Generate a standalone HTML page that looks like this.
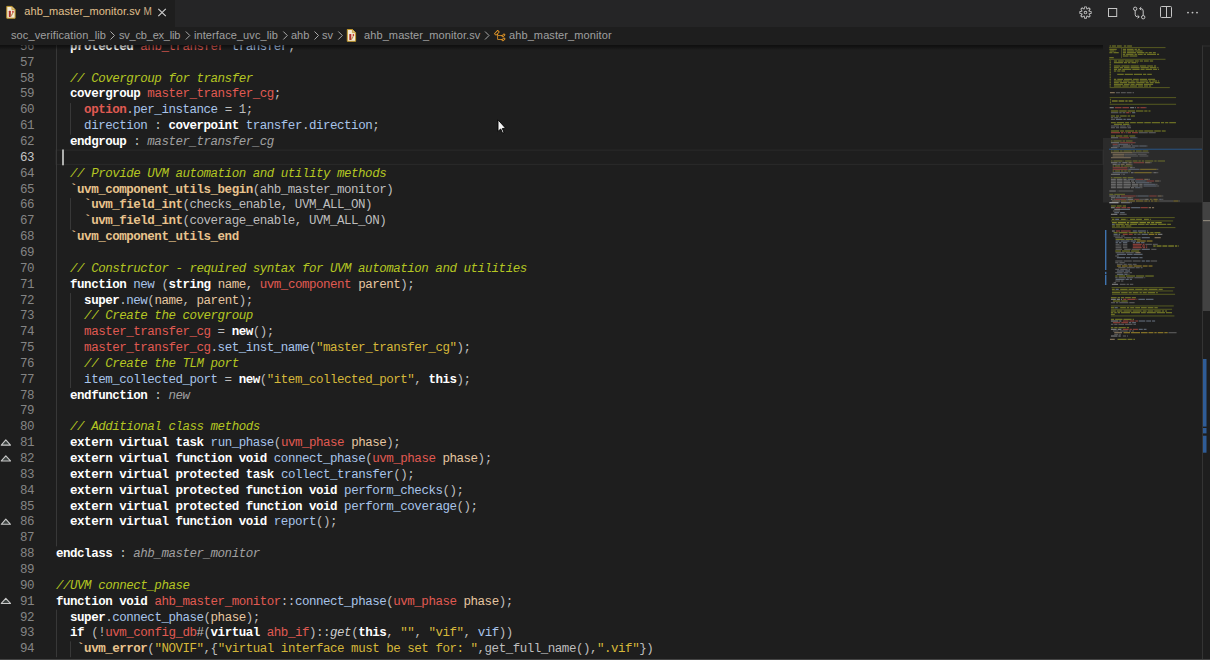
<!DOCTYPE html>
<html><head><meta charset="utf-8">
<style>
*{margin:0;padding:0;box-sizing:border-box}
html,body{width:1210px;height:660px;overflow:hidden;background:#1e1e1e}
body{position:relative;font-family:"Liberation Sans",sans-serif}
#tabs{position:absolute;left:0;top:0;width:1210px;height:27px;background:#252526}
#tab{position:absolute;left:0;top:0;width:175px;height:27px;background:#1e1e1e}
#tabname{position:absolute;left:24.3px;top:4px;font-size:11px;letter-spacing:0.08px;line-height:15px;color:#e2c08d;white-space:pre}
#tabM{position:absolute;left:143.5px;top:4.2px;font-size:10px;line-height:15px;color:#cdb088}
#crumbs{position:absolute;left:0;top:27px;width:1210px;height:18px;background:#1e1e1e;font-size:11px;color:#a0a0a0;white-space:pre}
#crumbs span{position:absolute;top:1px;line-height:15px}
#editor{position:absolute;left:0;top:45px;width:1103px;height:615px;overflow:hidden;background:#1e1e1e}
#code{position:absolute;left:0;top:0;width:1103px;font-family:"Liberation Mono",monospace;font-size:12.5px;letter-spacing:-0.476px;line-height:15.8333px;color:#bdbdbd;white-space:pre}
.ln{position:absolute;left:0;width:34px;text-align:right;color:#858585}
.ln.cur{color:#c6c6c6}
.tx{position:absolute;left:56px}
.k{color:#ffffff;font-weight:bold}
.c{color:#b4c622;font-style:italic}
.r{color:#e05a52}
.rb{color:#e05a52;font-weight:bold}
.s{color:#d6b83a}
.m{color:#e9c38d;font-weight:bold}
.f{color:#a8c4ea}
.p{color:#e6c6a0}
.i{color:#a0a0a0;font-style:italic}
.ii{color:#cccccc;font-style:italic}
#shadow{position:absolute;left:0;top:45px;width:1103px;height:5px;background:linear-gradient(#00000080 0%,#00000060 40%,#00000000 100%)}
</style></head><body>
<div id="tabs">
  <div id="tab">
    <div id="tabname">ahb_master_monitor.sv</div>
    <div id="tabM">M</div>
  </div>
</div>
<div id="crumbs">
  <span style="left:11px;letter-spacing:0.1px">soc_verification_lib</span>
  <span style="left:119px;letter-spacing:-0.2px">sv_cb_ex_lib</span>
  <span style="left:194px;letter-spacing:0.08px">interface_uvc_lib</span>
  <span style="left:291px">ahb</span>
  <span style="left:322px">sv</span>
  <span style="left:364px;letter-spacing:0.1px">ahb_master_monitor.sv</span>
  <span style="left:509px;letter-spacing:0.1px">ahb_master_monitor</span>
</div>
<div id="editor">
<div id="code">
<div class="ln" style="top:-5.100px">56</div><div class="tx" style="top:-5.100px">  <span class="k">protected</span> <span class="r">ahb_transfer</span> <span class="f">transfer</span>;</div>
<div class="ln" style="top:10.752px">57</div><div class="tx" style="top:10.752px"></div>
<div class="ln" style="top:26.604px">58</div><div class="tx" style="top:26.604px">  <span class="c">// Covergroup for transfer</span></div>
<div class="ln" style="top:42.456px">59</div><div class="tx" style="top:42.456px">  <span class="k">covergroup</span> <span class="r">master_transfer_cg</span>;</div>
<div class="ln" style="top:58.308px">60</div><div class="tx" style="top:58.308px">    <span class="rb">option</span>.<span class="f">per_instance</span> = 1;</div>
<div class="ln" style="top:74.160px">61</div><div class="tx" style="top:74.160px">    <span class="f">direction</span> : <span class="k">coverpoint</span> <span class="f">transfer</span>.<span class="f">direction</span>;</div>
<div class="ln" style="top:90.012px">62</div><div class="tx" style="top:90.012px">  <span class="k">endgroup</span> : <span class="i">master_transfer_cg</span></div>
<div class="ln cur" style="top:105.864px">63</div><div class="tx" style="top:105.864px"> </div>
<div class="ln" style="top:121.716px">64</div><div class="tx" style="top:121.716px">  <span class="c">// Provide UVM automation and utility methods</span></div>
<div class="ln" style="top:137.568px">65</div><div class="tx" style="top:137.568px">  <span class="m">`uvm_component_utils_begin</span>(ahb_master_monitor)</div>
<div class="ln" style="top:153.420px">66</div><div class="tx" style="top:153.420px">    <span class="m">`uvm_field_int</span>(checks_enable, UVM_ALL_ON)</div>
<div class="ln" style="top:169.272px">67</div><div class="tx" style="top:169.272px">    <span class="m">`uvm_field_int</span>(coverage_enable, UVM_ALL_ON)</div>
<div class="ln" style="top:185.124px">68</div><div class="tx" style="top:185.124px">  <span class="m">`uvm_component_utils_end</span></div>
<div class="ln" style="top:200.976px">69</div><div class="tx" style="top:200.976px"></div>
<div class="ln" style="top:216.828px">70</div><div class="tx" style="top:216.828px">  <span class="c">// Constructor - required syntax for UVM automation and utilities</span></div>
<div class="ln" style="top:232.680px">71</div><div class="tx" style="top:232.680px">  <span class="k">function</span> <span class="f">new</span> (<span class="k">string</span> <span class="p">name</span>, <span class="r">uvm_component</span> <span class="p">parent</span>);</div>
<div class="ln" style="top:248.532px">72</div><div class="tx" style="top:248.532px">    <span class="k">super</span>.<span class="f">new</span>(<span class="p">name</span>, <span class="p">parent</span>);</div>
<div class="ln" style="top:264.384px">73</div><div class="tx" style="top:264.384px">    <span class="c">// Create the covergroup</span></div>
<div class="ln" style="top:280.236px">74</div><div class="tx" style="top:280.236px">    <span class="r">master_transfer_cg</span> = <span class="k">new</span>();</div>
<div class="ln" style="top:296.088px">75</div><div class="tx" style="top:296.088px">    <span class="r">master_transfer_cg</span>.<span class="f">set_inst_name</span>(<span class="s">&quot;master_transfer_cg&quot;</span>);</div>
<div class="ln" style="top:311.940px">76</div><div class="tx" style="top:311.940px">    <span class="c">// Create the TLM port</span></div>
<div class="ln" style="top:327.792px">77</div><div class="tx" style="top:327.792px">    <span class="f">item_collected_port</span> = <span class="k">new</span>(<span class="s">&quot;item_collected_port&quot;</span>, <span class="k">this</span>);</div>
<div class="ln" style="top:343.644px">78</div><div class="tx" style="top:343.644px">  <span class="k">endfunction</span> : <span class="i">new</span></div>
<div class="ln" style="top:359.496px">79</div><div class="tx" style="top:359.496px"></div>
<div class="ln" style="top:375.348px">80</div><div class="tx" style="top:375.348px">  <span class="c">// Additional class methods</span></div>
<div class="ln" style="top:391.200px">81</div><div class="tx" style="top:391.200px">  <span class="k">extern</span> <span class="k">virtual</span> <span class="k">task</span> <span class="f">run_phase</span>(<span class="r">uvm_phase</span> <span class="p">phase</span>);</div>
<div class="ln" style="top:407.052px">82</div><div class="tx" style="top:407.052px">  <span class="k">extern</span> <span class="k">virtual</span> <span class="k">function</span> <span class="k">void</span> <span class="f">connect_phase</span>(<span class="r">uvm_phase</span> <span class="p">phase</span>);</div>
<div class="ln" style="top:422.904px">83</div><div class="tx" style="top:422.904px">  <span class="k">extern</span> <span class="k">virtual</span> <span class="k">protected</span> <span class="k">task</span> <span class="f">collect_transfer</span>();</div>
<div class="ln" style="top:438.756px">84</div><div class="tx" style="top:438.756px">  <span class="k">extern</span> <span class="k">virtual</span> <span class="k">protected</span> <span class="k">function</span> <span class="k">void</span> <span class="f">perform_checks</span>();</div>
<div class="ln" style="top:454.608px">85</div><div class="tx" style="top:454.608px">  <span class="k">extern</span> <span class="k">virtual</span> <span class="k">protected</span> <span class="k">function</span> <span class="k">void</span> <span class="f">perform_coverage</span>();</div>
<div class="ln" style="top:470.460px">86</div><div class="tx" style="top:470.460px">  <span class="k">extern</span> <span class="k">virtual</span> <span class="k">function</span> <span class="k">void</span> <span class="f">report</span>();</div>
<div class="ln" style="top:486.312px">87</div><div class="tx" style="top:486.312px"></div>
<div class="ln" style="top:502.164px">88</div><div class="tx" style="top:502.164px"><span class="k">endclass</span> : <span class="i">ahb_master_monitor</span></div>
<div class="ln" style="top:518.016px">89</div><div class="tx" style="top:518.016px"></div>
<div class="ln" style="top:533.868px">90</div><div class="tx" style="top:533.868px"><span class="c">//UVM connect_phase</span></div>
<div class="ln" style="top:549.720px">91</div><div class="tx" style="top:549.720px"><span class="k">function</span> <span class="k">void</span> <span class="r">ahb_master_monitor</span>::<span class="f">connect_phase</span>(<span class="r">uvm_phase</span> <span class="p">phase</span>);</div>
<div class="ln" style="top:565.572px">92</div><div class="tx" style="top:565.572px">  <span class="k">super</span>.<span class="f">connect_phase</span>(<span class="p">phase</span>);</div>
<div class="ln" style="top:581.424px">93</div><div class="tx" style="top:581.424px">  <span class="k">if</span> (!<span class="r">uvm_config_db</span>#(<span class="k">virtual</span> <span class="r">ahb_if</span>)::<span class="ii">get</span>(<span class="k">this</span>, <span class="s">&quot;&quot;</span>, <span class="s">&quot;vif&quot;</span>, <span class="f">vif</span>))</div>
<div class="ln" style="top:597.276px">94</div><div class="tx" style="top:597.276px">   <span class="m">`uvm_error</span>(<span class="s">&quot;NOVIF&quot;</span>,{<span class="s">&quot;virtual interface must be set for: &quot;</span>,get_full_name(),<span class="s">&quot;.vif&quot;</span>})</div>
<div class="ln" style="top:613.128px">95</div><div class="tx" style="top:613.128px"><span class="k">endfunction</span> : <span class="i">connect_phase</span></div>
</div>
</div>
<svg id="deco" width="1210" height="660" style="position:absolute;left:0;top:0"><rect x="56" y="150.1" width="1047" height="14.3" fill="none" stroke="#2a2a2a" stroke-width="1"/><rect x="62" y="149.50" width="2" height="15.8" fill="#aeafad"/><rect x="56" y="45.00" width="1" height="501.37" fill="#383838"/><rect x="70" y="103.03" width="1" height="31.67" fill="#383838"/><rect x="70" y="198.03" width="1" height="31.67" fill="#383838"/><rect x="70" y="293.03" width="1" height="95.00" fill="#383838"/><rect x="56" y="609.70" width="1" height="47.50" fill="#383838"/><rect x="70" y="641.37" width="1" height="15.83" fill="#383838"/><path d="M1.3 445.15 L5.8 439.95 L10.5 445.15 Z" fill="#3c4240" stroke="#c8c8c8" stroke-width="1.1" stroke-linejoin="round"/><path d="M1.3 460.98 L5.8 455.78 L10.5 460.98 Z" fill="#3c4240" stroke="#c8c8c8" stroke-width="1.1" stroke-linejoin="round"/><path d="M1.3 524.32 L5.8 519.12 L10.5 524.32 Z" fill="#3c4240" stroke="#c8c8c8" stroke-width="1.1" stroke-linejoin="round"/><path d="M1.3 603.48 L5.8 598.28 L10.5 603.48 Z" fill="#3c4240" stroke="#c8c8c8" stroke-width="1.1" stroke-linejoin="round"/></svg>
<svg id="mm" width="1210" height="660" style="position:absolute;left:0;top:0">
<rect x="1103" y="138" width="99" height="64.5" fill="#797979" fill-opacity="0.15"/>
<rect x="1110.97" y="137.10" width="7.35" height="1.15" fill="#dcdcdc" fill-opacity="0.375"/>
<rect x="1119.30" y="137.10" width="9.85" height="1.15" fill="#e0584e" fill-opacity="0.435"/>
<rect x="1130.13" y="137.10" width="6.52" height="1.15" fill="#a8bcd8" fill-opacity="0.360"/>
<rect x="1136.80" y="137.10" width="0.68" height="1.15" fill="#b4b4b4" fill-opacity="0.300"/>
<rect x="1110.97" y="140.43" width="1.52" height="1.15" fill="#b8c02c" fill-opacity="0.413"/>
<rect x="1113.47" y="140.43" width="8.18" height="1.15" fill="#b8c02c" fill-opacity="0.413"/>
<rect x="1122.63" y="140.43" width="2.35" height="1.15" fill="#b8c02c" fill-opacity="0.413"/>
<rect x="1125.97" y="140.43" width="6.52" height="1.15" fill="#b8c02c" fill-opacity="0.413"/>
<rect x="1110.97" y="142.10" width="8.18" height="1.15" fill="#dcdcdc" fill-opacity="0.375"/>
<rect x="1120.13" y="142.10" width="14.85" height="1.15" fill="#e0584e" fill-opacity="0.435"/>
<rect x="1135.13" y="142.10" width="0.68" height="1.15" fill="#b4b4b4" fill-opacity="0.300"/>
<rect x="1112.63" y="143.77" width="4.85" height="1.15" fill="#e0584e" fill-opacity="0.435"/>
<rect x="1117.63" y="143.77" width="0.68" height="1.15" fill="#b4b4b4" fill-opacity="0.300"/>
<rect x="1118.47" y="143.77" width="9.85" height="1.15" fill="#a8bcd8" fill-opacity="0.360"/>
<rect x="1129.30" y="143.77" width="0.68" height="1.15" fill="#b4b4b4" fill-opacity="0.300"/>
<rect x="1130.97" y="143.77" width="1.52" height="1.15" fill="#b4b4b4" fill-opacity="0.300"/>
<rect x="1112.63" y="145.43" width="7.35" height="1.15" fill="#a8bcd8" fill-opacity="0.360"/>
<rect x="1120.97" y="145.43" width="0.68" height="1.15" fill="#b4b4b4" fill-opacity="0.300"/>
<rect x="1122.63" y="145.43" width="8.18" height="1.15" fill="#dcdcdc" fill-opacity="0.375"/>
<rect x="1131.80" y="145.43" width="6.52" height="1.15" fill="#a8bcd8" fill-opacity="0.360"/>
<rect x="1138.47" y="145.43" width="0.68" height="1.15" fill="#b4b4b4" fill-opacity="0.300"/>
<rect x="1139.30" y="145.43" width="7.35" height="1.15" fill="#a8bcd8" fill-opacity="0.360"/>
<rect x="1146.80" y="145.43" width="0.68" height="1.15" fill="#b4b4b4" fill-opacity="0.300"/>
<rect x="1110.97" y="147.10" width="6.52" height="1.15" fill="#dcdcdc" fill-opacity="0.375"/>
<rect x="1118.47" y="147.10" width="0.68" height="1.15" fill="#b4b4b4" fill-opacity="0.300"/>
<rect x="1120.13" y="147.10" width="14.85" height="1.15" fill="#b4b4b4" fill-opacity="0.300"/>
<rect x="1110.97" y="150.43" width="1.52" height="1.15" fill="#b8c02c" fill-opacity="0.413"/>
<rect x="1113.47" y="150.43" width="5.68" height="1.15" fill="#b8c02c" fill-opacity="0.413"/>
<rect x="1120.13" y="150.43" width="2.35" height="1.15" fill="#b8c02c" fill-opacity="0.413"/>
<rect x="1123.47" y="150.43" width="8.18" height="1.15" fill="#b8c02c" fill-opacity="0.413"/>
<rect x="1132.63" y="150.43" width="2.35" height="1.15" fill="#b8c02c" fill-opacity="0.413"/>
<rect x="1135.97" y="150.43" width="5.68" height="1.15" fill="#b8c02c" fill-opacity="0.413"/>
<rect x="1142.63" y="150.43" width="5.68" height="1.15" fill="#b8c02c" fill-opacity="0.413"/>
<rect x="1110.97" y="152.10" width="21.52" height="1.15" fill="#e0c090" fill-opacity="0.413"/>
<rect x="1132.63" y="152.10" width="16.52" height="1.15" fill="#b4b4b4" fill-opacity="0.300"/>
<rect x="1112.63" y="153.77" width="11.52" height="1.15" fill="#e0c090" fill-opacity="0.413"/>
<rect x="1124.30" y="153.77" width="12.35" height="1.15" fill="#b4b4b4" fill-opacity="0.300"/>
<rect x="1137.63" y="153.77" width="9.02" height="1.15" fill="#b4b4b4" fill-opacity="0.300"/>
<rect x="1112.63" y="155.43" width="11.52" height="1.15" fill="#e0c090" fill-opacity="0.413"/>
<rect x="1124.30" y="155.43" width="14.02" height="1.15" fill="#b4b4b4" fill-opacity="0.300"/>
<rect x="1139.30" y="155.43" width="9.02" height="1.15" fill="#b4b4b4" fill-opacity="0.300"/>
<rect x="1110.97" y="157.10" width="19.85" height="1.15" fill="#e0c090" fill-opacity="0.413"/>
<rect x="1110.97" y="160.43" width="1.52" height="1.15" fill="#b8c02c" fill-opacity="0.413"/>
<rect x="1113.47" y="160.43" width="9.02" height="1.15" fill="#b8c02c" fill-opacity="0.413"/>
<rect x="1123.47" y="160.43" width="0.68" height="1.15" fill="#b8c02c" fill-opacity="0.413"/>
<rect x="1125.13" y="160.43" width="6.52" height="1.15" fill="#b8c02c" fill-opacity="0.413"/>
<rect x="1132.63" y="160.43" width="4.85" height="1.15" fill="#b8c02c" fill-opacity="0.413"/>
<rect x="1138.47" y="160.43" width="2.35" height="1.15" fill="#b8c02c" fill-opacity="0.413"/>
<rect x="1141.80" y="160.43" width="2.35" height="1.15" fill="#b8c02c" fill-opacity="0.413"/>
<rect x="1145.13" y="160.43" width="8.18" height="1.15" fill="#b8c02c" fill-opacity="0.413"/>
<rect x="1154.30" y="160.43" width="2.35" height="1.15" fill="#b8c02c" fill-opacity="0.413"/>
<rect x="1157.63" y="160.43" width="7.35" height="1.15" fill="#b8c02c" fill-opacity="0.413"/>
<rect x="1110.97" y="162.10" width="6.52" height="1.15" fill="#dcdcdc" fill-opacity="0.375"/>
<rect x="1118.47" y="162.10" width="2.35" height="1.15" fill="#a8bcd8" fill-opacity="0.360"/>
<rect x="1121.80" y="162.10" width="0.68" height="1.15" fill="#b4b4b4" fill-opacity="0.300"/>
<rect x="1122.63" y="162.10" width="4.85" height="1.15" fill="#dcdcdc" fill-opacity="0.375"/>
<rect x="1128.47" y="162.10" width="3.18" height="1.15" fill="#e0c090" fill-opacity="0.413"/>
<rect x="1131.80" y="162.10" width="0.68" height="1.15" fill="#b4b4b4" fill-opacity="0.300"/>
<rect x="1133.47" y="162.10" width="10.68" height="1.15" fill="#e0584e" fill-opacity="0.435"/>
<rect x="1145.13" y="162.10" width="4.85" height="1.15" fill="#e0c090" fill-opacity="0.413"/>
<rect x="1150.13" y="162.10" width="1.52" height="1.15" fill="#b4b4b4" fill-opacity="0.300"/>
<rect x="1112.63" y="163.77" width="4.02" height="1.15" fill="#dcdcdc" fill-opacity="0.375"/>
<rect x="1116.80" y="163.77" width="0.68" height="1.15" fill="#b4b4b4" fill-opacity="0.300"/>
<rect x="1117.63" y="163.77" width="2.35" height="1.15" fill="#a8bcd8" fill-opacity="0.360"/>
<rect x="1120.13" y="163.77" width="0.68" height="1.15" fill="#b4b4b4" fill-opacity="0.300"/>
<rect x="1120.97" y="163.77" width="3.18" height="1.15" fill="#e0c090" fill-opacity="0.413"/>
<rect x="1124.30" y="163.77" width="0.68" height="1.15" fill="#b4b4b4" fill-opacity="0.300"/>
<rect x="1125.97" y="163.77" width="4.85" height="1.15" fill="#e0c090" fill-opacity="0.413"/>
<rect x="1130.97" y="163.77" width="1.52" height="1.15" fill="#b4b4b4" fill-opacity="0.300"/>
<rect x="1112.63" y="165.43" width="1.52" height="1.15" fill="#b8c02c" fill-opacity="0.413"/>
<rect x="1115.13" y="165.43" width="4.85" height="1.15" fill="#b8c02c" fill-opacity="0.413"/>
<rect x="1120.97" y="165.43" width="2.35" height="1.15" fill="#b8c02c" fill-opacity="0.413"/>
<rect x="1124.30" y="165.43" width="8.18" height="1.15" fill="#b8c02c" fill-opacity="0.413"/>
<rect x="1112.63" y="167.10" width="14.85" height="1.15" fill="#e0584e" fill-opacity="0.435"/>
<rect x="1128.47" y="167.10" width="0.68" height="1.15" fill="#b4b4b4" fill-opacity="0.300"/>
<rect x="1130.13" y="167.10" width="2.35" height="1.15" fill="#dcdcdc" fill-opacity="0.375"/>
<rect x="1132.63" y="167.10" width="2.35" height="1.15" fill="#b4b4b4" fill-opacity="0.300"/>
<rect x="1112.63" y="168.77" width="14.85" height="1.15" fill="#e0584e" fill-opacity="0.435"/>
<rect x="1127.63" y="168.77" width="0.68" height="1.15" fill="#b4b4b4" fill-opacity="0.300"/>
<rect x="1128.47" y="168.77" width="10.68" height="1.15" fill="#a8bcd8" fill-opacity="0.360"/>
<rect x="1139.30" y="168.77" width="0.68" height="1.15" fill="#b4b4b4" fill-opacity="0.300"/>
<rect x="1140.13" y="168.77" width="16.52" height="1.15" fill="#d8b830" fill-opacity="0.450"/>
<rect x="1156.80" y="168.77" width="1.52" height="1.15" fill="#b4b4b4" fill-opacity="0.300"/>
<rect x="1112.63" y="170.43" width="1.52" height="1.15" fill="#b8c02c" fill-opacity="0.413"/>
<rect x="1115.13" y="170.43" width="4.85" height="1.15" fill="#b8c02c" fill-opacity="0.413"/>
<rect x="1120.97" y="170.43" width="2.35" height="1.15" fill="#b8c02c" fill-opacity="0.413"/>
<rect x="1124.30" y="170.43" width="2.35" height="1.15" fill="#b8c02c" fill-opacity="0.413"/>
<rect x="1127.63" y="170.43" width="3.18" height="1.15" fill="#b8c02c" fill-opacity="0.413"/>
<rect x="1112.63" y="172.10" width="15.68" height="1.15" fill="#a8bcd8" fill-opacity="0.360"/>
<rect x="1129.30" y="172.10" width="0.68" height="1.15" fill="#b4b4b4" fill-opacity="0.300"/>
<rect x="1130.97" y="172.10" width="2.35" height="1.15" fill="#dcdcdc" fill-opacity="0.375"/>
<rect x="1133.47" y="172.10" width="0.68" height="1.15" fill="#b4b4b4" fill-opacity="0.300"/>
<rect x="1134.30" y="172.10" width="17.35" height="1.15" fill="#d8b830" fill-opacity="0.450"/>
<rect x="1151.80" y="172.10" width="0.68" height="1.15" fill="#b4b4b4" fill-opacity="0.300"/>
<rect x="1153.46" y="172.10" width="3.18" height="1.15" fill="#dcdcdc" fill-opacity="0.375"/>
<rect x="1156.80" y="172.10" width="1.52" height="1.15" fill="#b4b4b4" fill-opacity="0.300"/>
<rect x="1110.97" y="173.77" width="9.02" height="1.15" fill="#dcdcdc" fill-opacity="0.375"/>
<rect x="1120.97" y="173.77" width="0.68" height="1.15" fill="#b4b4b4" fill-opacity="0.300"/>
<rect x="1122.63" y="173.77" width="2.35" height="1.15" fill="#b4b4b4" fill-opacity="0.300"/>
<rect x="1110.97" y="177.10" width="1.52" height="1.15" fill="#b8c02c" fill-opacity="0.413"/>
<rect x="1113.47" y="177.10" width="8.18" height="1.15" fill="#b8c02c" fill-opacity="0.413"/>
<rect x="1122.63" y="177.10" width="4.02" height="1.15" fill="#b8c02c" fill-opacity="0.413"/>
<rect x="1127.63" y="177.10" width="5.68" height="1.15" fill="#b8c02c" fill-opacity="0.413"/>
<rect x="1110.97" y="178.77" width="4.85" height="1.15" fill="#dcdcdc" fill-opacity="0.375"/>
<rect x="1116.80" y="178.77" width="5.68" height="1.15" fill="#dcdcdc" fill-opacity="0.375"/>
<rect x="1123.47" y="178.77" width="3.18" height="1.15" fill="#dcdcdc" fill-opacity="0.375"/>
<rect x="1127.63" y="178.77" width="7.35" height="1.15" fill="#a8bcd8" fill-opacity="0.360"/>
<rect x="1135.13" y="178.77" width="0.68" height="1.15" fill="#b4b4b4" fill-opacity="0.300"/>
<rect x="1135.97" y="178.77" width="7.35" height="1.15" fill="#e0584e" fill-opacity="0.435"/>
<rect x="1144.30" y="178.77" width="4.02" height="1.15" fill="#e0c090" fill-opacity="0.413"/>
<rect x="1148.47" y="178.77" width="1.52" height="1.15" fill="#b4b4b4" fill-opacity="0.300"/>
<rect x="1110.97" y="180.43" width="4.85" height="1.15" fill="#dcdcdc" fill-opacity="0.375"/>
<rect x="1116.80" y="180.43" width="5.68" height="1.15" fill="#dcdcdc" fill-opacity="0.375"/>
<rect x="1123.47" y="180.43" width="6.52" height="1.15" fill="#dcdcdc" fill-opacity="0.375"/>
<rect x="1130.97" y="180.43" width="3.18" height="1.15" fill="#dcdcdc" fill-opacity="0.375"/>
<rect x="1135.13" y="180.43" width="10.68" height="1.15" fill="#a8bcd8" fill-opacity="0.360"/>
<rect x="1145.97" y="180.43" width="0.68" height="1.15" fill="#b4b4b4" fill-opacity="0.300"/>
<rect x="1146.80" y="180.43" width="7.35" height="1.15" fill="#e0584e" fill-opacity="0.435"/>
<rect x="1155.13" y="180.43" width="4.02" height="1.15" fill="#e0c090" fill-opacity="0.413"/>
<rect x="1159.30" y="180.43" width="1.52" height="1.15" fill="#b4b4b4" fill-opacity="0.300"/>
<rect x="1110.97" y="182.10" width="4.85" height="1.15" fill="#dcdcdc" fill-opacity="0.375"/>
<rect x="1116.80" y="182.10" width="5.68" height="1.15" fill="#dcdcdc" fill-opacity="0.375"/>
<rect x="1123.47" y="182.10" width="7.35" height="1.15" fill="#dcdcdc" fill-opacity="0.375"/>
<rect x="1131.80" y="182.10" width="3.18" height="1.15" fill="#dcdcdc" fill-opacity="0.375"/>
<rect x="1135.97" y="182.10" width="13.18" height="1.15" fill="#a8bcd8" fill-opacity="0.360"/>
<rect x="1149.30" y="182.10" width="2.35" height="1.15" fill="#b4b4b4" fill-opacity="0.300"/>
<rect x="1110.97" y="183.77" width="4.85" height="1.15" fill="#dcdcdc" fill-opacity="0.375"/>
<rect x="1116.80" y="183.77" width="5.68" height="1.15" fill="#dcdcdc" fill-opacity="0.375"/>
<rect x="1123.47" y="183.77" width="7.35" height="1.15" fill="#dcdcdc" fill-opacity="0.375"/>
<rect x="1131.80" y="183.77" width="6.52" height="1.15" fill="#dcdcdc" fill-opacity="0.375"/>
<rect x="1139.30" y="183.77" width="3.18" height="1.15" fill="#dcdcdc" fill-opacity="0.375"/>
<rect x="1143.47" y="183.77" width="11.52" height="1.15" fill="#a8bcd8" fill-opacity="0.360"/>
<rect x="1155.13" y="183.77" width="2.35" height="1.15" fill="#b4b4b4" fill-opacity="0.300"/>
<rect x="1110.97" y="185.43" width="4.85" height="1.15" fill="#dcdcdc" fill-opacity="0.375"/>
<rect x="1116.80" y="185.43" width="5.68" height="1.15" fill="#dcdcdc" fill-opacity="0.375"/>
<rect x="1123.47" y="185.43" width="7.35" height="1.15" fill="#dcdcdc" fill-opacity="0.375"/>
<rect x="1131.80" y="185.43" width="6.52" height="1.15" fill="#dcdcdc" fill-opacity="0.375"/>
<rect x="1139.30" y="185.43" width="3.18" height="1.15" fill="#dcdcdc" fill-opacity="0.375"/>
<rect x="1143.47" y="185.43" width="13.18" height="1.15" fill="#a8bcd8" fill-opacity="0.360"/>
<rect x="1156.80" y="185.43" width="2.35" height="1.15" fill="#b4b4b4" fill-opacity="0.300"/>
<rect x="1110.97" y="187.10" width="4.85" height="1.15" fill="#dcdcdc" fill-opacity="0.375"/>
<rect x="1116.80" y="187.10" width="5.68" height="1.15" fill="#dcdcdc" fill-opacity="0.375"/>
<rect x="1123.47" y="187.10" width="6.52" height="1.15" fill="#dcdcdc" fill-opacity="0.375"/>
<rect x="1130.97" y="187.10" width="3.18" height="1.15" fill="#dcdcdc" fill-opacity="0.375"/>
<rect x="1135.13" y="187.10" width="4.85" height="1.15" fill="#a8bcd8" fill-opacity="0.360"/>
<rect x="1140.13" y="187.10" width="2.35" height="1.15" fill="#b4b4b4" fill-opacity="0.300"/>
<rect x="1109.30" y="190.43" width="6.52" height="1.15" fill="#dcdcdc" fill-opacity="0.375"/>
<rect x="1116.80" y="190.43" width="0.68" height="1.15" fill="#b4b4b4" fill-opacity="0.300"/>
<rect x="1118.47" y="190.43" width="14.85" height="1.15" fill="#b4b4b4" fill-opacity="0.300"/>
<rect x="1109.30" y="193.77" width="4.02" height="1.15" fill="#b8c02c" fill-opacity="0.413"/>
<rect x="1114.30" y="193.77" width="10.68" height="1.15" fill="#b8c02c" fill-opacity="0.413"/>
<rect x="1109.30" y="195.43" width="6.52" height="1.15" fill="#dcdcdc" fill-opacity="0.375"/>
<rect x="1116.80" y="195.43" width="3.18" height="1.15" fill="#dcdcdc" fill-opacity="0.375"/>
<rect x="1120.97" y="195.43" width="14.85" height="1.15" fill="#e0584e" fill-opacity="0.435"/>
<rect x="1135.97" y="195.43" width="1.52" height="1.15" fill="#b4b4b4" fill-opacity="0.300"/>
<rect x="1137.63" y="195.43" width="10.68" height="1.15" fill="#a8bcd8" fill-opacity="0.360"/>
<rect x="1148.47" y="195.43" width="0.68" height="1.15" fill="#b4b4b4" fill-opacity="0.300"/>
<rect x="1149.30" y="195.43" width="7.35" height="1.15" fill="#e0584e" fill-opacity="0.435"/>
<rect x="1157.63" y="195.43" width="4.02" height="1.15" fill="#e0c090" fill-opacity="0.413"/>
<rect x="1161.80" y="195.43" width="1.52" height="1.15" fill="#b4b4b4" fill-opacity="0.300"/>
<rect x="1110.97" y="197.10" width="4.02" height="1.15" fill="#dcdcdc" fill-opacity="0.375"/>
<rect x="1115.13" y="197.10" width="0.68" height="1.15" fill="#b4b4b4" fill-opacity="0.300"/>
<rect x="1115.97" y="197.10" width="10.68" height="1.15" fill="#a8bcd8" fill-opacity="0.360"/>
<rect x="1126.80" y="197.10" width="0.68" height="1.15" fill="#b4b4b4" fill-opacity="0.300"/>
<rect x="1127.63" y="197.10" width="4.02" height="1.15" fill="#e0c090" fill-opacity="0.413"/>
<rect x="1131.80" y="197.10" width="1.52" height="1.15" fill="#b4b4b4" fill-opacity="0.300"/>
<rect x="1110.97" y="198.77" width="1.52" height="1.15" fill="#dcdcdc" fill-opacity="0.375"/>
<rect x="1113.47" y="198.77" width="1.52" height="1.15" fill="#b4b4b4" fill-opacity="0.300"/>
<rect x="1115.13" y="198.77" width="10.68" height="1.15" fill="#e0584e" fill-opacity="0.435"/>
<rect x="1125.97" y="198.77" width="1.52" height="1.15" fill="#b4b4b4" fill-opacity="0.300"/>
<rect x="1127.63" y="198.77" width="5.68" height="1.15" fill="#dcdcdc" fill-opacity="0.375"/>
<rect x="1134.30" y="198.77" width="4.85" height="1.15" fill="#e0584e" fill-opacity="0.435"/>
<rect x="1139.30" y="198.77" width="5.68" height="1.15" fill="#b4b4b4" fill-opacity="0.300"/>
<rect x="1145.13" y="198.77" width="3.18" height="1.15" fill="#dcdcdc" fill-opacity="0.375"/>
<rect x="1148.47" y="198.77" width="0.68" height="1.15" fill="#b4b4b4" fill-opacity="0.300"/>
<rect x="1150.13" y="198.77" width="1.52" height="1.15" fill="#d8b830" fill-opacity="0.450"/>
<rect x="1151.80" y="198.77" width="0.68" height="1.15" fill="#b4b4b4" fill-opacity="0.300"/>
<rect x="1153.46" y="198.77" width="4.02" height="1.15" fill="#d8b830" fill-opacity="0.450"/>
<rect x="1157.63" y="198.77" width="0.68" height="1.15" fill="#b4b4b4" fill-opacity="0.300"/>
<rect x="1159.30" y="198.77" width="2.35" height="1.15" fill="#a8bcd8" fill-opacity="0.360"/>
<rect x="1161.80" y="198.77" width="1.52" height="1.15" fill="#b4b4b4" fill-opacity="0.300"/>
<rect x="1111.80" y="200.43" width="8.18" height="1.15" fill="#e0c090" fill-opacity="0.413"/>
<rect x="1120.13" y="200.43" width="0.68" height="1.15" fill="#b4b4b4" fill-opacity="0.300"/>
<rect x="1120.97" y="200.43" width="5.68" height="1.15" fill="#d8b830" fill-opacity="0.450"/>
<rect x="1126.80" y="200.43" width="1.52" height="1.15" fill="#b4b4b4" fill-opacity="0.300"/>
<rect x="1128.47" y="200.43" width="6.52" height="1.15" fill="#d8b830" fill-opacity="0.450"/>
<rect x="1135.97" y="200.43" width="7.35" height="1.15" fill="#d8b830" fill-opacity="0.450"/>
<rect x="1144.30" y="200.43" width="3.18" height="1.15" fill="#d8b830" fill-opacity="0.450"/>
<rect x="1148.47" y="200.43" width="1.52" height="1.15" fill="#d8b830" fill-opacity="0.450"/>
<rect x="1150.96" y="200.43" width="2.35" height="1.15" fill="#d8b830" fill-opacity="0.450"/>
<rect x="1154.30" y="200.43" width="3.18" height="1.15" fill="#d8b830" fill-opacity="0.450"/>
<rect x="1158.46" y="200.43" width="0.68" height="1.15" fill="#d8b830" fill-opacity="0.450"/>
<rect x="1159.30" y="200.43" width="14.02" height="1.15" fill="#b4b4b4" fill-opacity="0.300"/>
<rect x="1173.46" y="200.43" width="4.85" height="1.15" fill="#d8b830" fill-opacity="0.450"/>
<rect x="1178.46" y="200.43" width="1.52" height="1.15" fill="#b4b4b4" fill-opacity="0.300"/>
<rect x="1109.30" y="202.10" width="9.02" height="1.15" fill="#dcdcdc" fill-opacity="0.375"/>
<rect x="1119.30" y="202.10" width="0.68" height="1.15" fill="#b4b4b4" fill-opacity="0.300"/>
<rect x="1120.97" y="202.10" width="10.68" height="1.15" fill="#b4b4b4" fill-opacity="0.300"/>
<rect x="1109.63" y="45.43" width="1.50" height="1.15" fill="#b8c02c" fill-opacity="0.55"/>
<rect x="1111.94" y="45.43" width="4.02" height="1.15" fill="#b8c02c" fill-opacity="0.55"/>
<rect x="1116.94" y="45.43" width="4.77" height="1.15" fill="#b8c02c" fill-opacity="0.55"/>
<rect x="1123.84" y="45.43" width="2.35" height="1.15" fill="#b8c02c" fill-opacity="0.55"/>
<rect x="1127.18" y="45.43" width="4.78" height="1.15" fill="#b8c02c" fill-opacity="0.55"/>
<rect x="1108.97" y="47.10" width="56.53" height="1.0" fill="#8e9624" fill-opacity="0.5"/>
<rect x="1109.30" y="48.76" width="7.45" height="1.15" fill="#b8c02c" fill-opacity="0.55"/>
<rect x="1122.85" y="48.76" width="3.18" height="1.15" fill="#b8c02c" fill-opacity="0.55"/>
<rect x="1127.02" y="48.76" width="6.52" height="1.15" fill="#b8c02c" fill-opacity="0.55"/>
<rect x="1134.52" y="48.76" width="2.35" height="1.15" fill="#b8c02c" fill-opacity="0.55"/>
<rect x="1137.85" y="48.76" width="2.04" height="1.15" fill="#b8c02c" fill-opacity="0.55"/>
<rect x="1109.63" y="50.43" width="4.85" height="1.15" fill="#b8c02c" fill-opacity="0.55"/>
<rect x="1115.46" y="50.43" width="0.63" height="1.15" fill="#b8c02c" fill-opacity="0.55"/>
<rect x="1122.85" y="50.43" width="3.18" height="1.15" fill="#b8c02c" fill-opacity="0.55"/>
<rect x="1127.02" y="50.43" width="7.35" height="1.15" fill="#b8c02c" fill-opacity="0.55"/>
<rect x="1135.35" y="50.43" width="7.19" height="1.15" fill="#b8c02c" fill-opacity="0.55"/>
<rect x="1109.30" y="52.10" width="3.18" height="1.15" fill="#b8c02c" fill-opacity="0.55"/>
<rect x="1113.46" y="52.10" width="5.27" height="1.15" fill="#b8c02c" fill-opacity="0.55"/>
<rect x="1122.85" y="52.10" width="3.18" height="1.15" fill="#b8c02c" fill-opacity="0.55"/>
<rect x="1127.02" y="52.10" width="9.02" height="1.15" fill="#b8c02c" fill-opacity="0.55"/>
<rect x="1137.02" y="52.10" width="7.35" height="1.15" fill="#b8c02c" fill-opacity="0.55"/>
<rect x="1145.35" y="52.10" width="2.35" height="1.15" fill="#b8c02c" fill-opacity="0.55"/>
<rect x="1148.68" y="52.10" width="3.18" height="1.15" fill="#b8c02c" fill-opacity="0.55"/>
<rect x="1152.85" y="52.10" width="2.91" height="1.15" fill="#b8c02c" fill-opacity="0.55"/>
<rect x="1122.85" y="53.76" width="2.35" height="1.15" fill="#b8c02c" fill-opacity="0.55"/>
<rect x="1126.18" y="53.76" width="7.35" height="1.15" fill="#b8c02c" fill-opacity="0.55"/>
<rect x="1134.52" y="53.76" width="2.35" height="1.15" fill="#b8c02c" fill-opacity="0.55"/>
<rect x="1137.85" y="53.76" width="4.85" height="1.15" fill="#b8c02c" fill-opacity="0.55"/>
<rect x="1143.68" y="53.76" width="2.35" height="1.15" fill="#b8c02c" fill-opacity="0.55"/>
<rect x="1147.02" y="53.76" width="9.02" height="1.15" fill="#b8c02c" fill-opacity="0.55"/>
<rect x="1157.02" y="53.76" width="2.05" height="1.15" fill="#b8c02c" fill-opacity="0.55"/>
<rect x="1122.85" y="55.43" width="5.68" height="1.15" fill="#b8c02c" fill-opacity="0.55"/>
<rect x="1129.52" y="55.43" width="7.73" height="1.15" fill="#b8c02c" fill-opacity="0.55"/>
<rect x="1109.30" y="57.10" width="4.48" height="1.15" fill="#b8c02c" fill-opacity="0.55"/>
<rect x="1108.97" y="58.77" width="56.53" height="1.0" fill="#8e9624" fill-opacity="0.5"/>
<rect x="1109.63" y="60.43" width="1.17" height="1.15" fill="#b8c02c" fill-opacity="0.55"/>
<rect x="1113.93" y="60.43" width="3.18" height="1.15" fill="#b8c02c" fill-opacity="0.55"/>
<rect x="1118.09" y="60.43" width="5.68" height="1.15" fill="#b8c02c" fill-opacity="0.55"/>
<rect x="1124.76" y="60.43" width="9.02" height="1.15" fill="#b8c02c" fill-opacity="0.55"/>
<rect x="1134.76" y="60.43" width="4.02" height="1.15" fill="#b8c02c" fill-opacity="0.55"/>
<rect x="1139.76" y="60.43" width="3.18" height="1.15" fill="#b8c02c" fill-opacity="0.55"/>
<rect x="1143.92" y="60.43" width="4.85" height="1.15" fill="#b8c02c" fill-opacity="0.55"/>
<rect x="1149.76" y="60.43" width="3.36" height="1.15" fill="#b8c02c" fill-opacity="0.55"/>
<rect x="1109.63" y="62.10" width="1.17" height="1.15" fill="#b8c02c" fill-opacity="0.55"/>
<rect x="1113.93" y="62.10" width="9.02" height="1.15" fill="#b8c02c" fill-opacity="0.55"/>
<rect x="1123.93" y="62.10" width="3.18" height="1.15" fill="#b8c02c" fill-opacity="0.55"/>
<rect x="1128.09" y="62.10" width="2.35" height="1.15" fill="#b8c02c" fill-opacity="0.55"/>
<rect x="1131.42" y="62.10" width="4.85" height="1.15" fill="#b8c02c" fill-opacity="0.55"/>
<rect x="1137.26" y="62.10" width="0.65" height="1.15" fill="#b8c02c" fill-opacity="0.55"/>
<rect x="1109.63" y="63.77" width="1.17" height="1.15" fill="#b8c02c" fill-opacity="0.55"/>
<rect x="1109.63" y="65.43" width="1.17" height="1.15" fill="#b8c02c" fill-opacity="0.55"/>
<rect x="1113.93" y="65.43" width="6.52" height="1.15" fill="#b8c02c" fill-opacity="0.55"/>
<rect x="1121.43" y="65.43" width="8.18" height="1.15" fill="#b8c02c" fill-opacity="0.55"/>
<rect x="1130.59" y="65.43" width="8.18" height="1.15" fill="#b8c02c" fill-opacity="0.55"/>
<rect x="1139.76" y="65.43" width="6.52" height="1.15" fill="#b8c02c" fill-opacity="0.55"/>
<rect x="1147.26" y="65.43" width="5.68" height="1.15" fill="#b8c02c" fill-opacity="0.55"/>
<rect x="1153.92" y="65.43" width="2.17" height="1.15" fill="#b8c02c" fill-opacity="0.55"/>
<rect x="1109.63" y="67.10" width="1.17" height="1.15" fill="#b8c02c" fill-opacity="0.55"/>
<rect x="1113.93" y="67.10" width="4.85" height="1.15" fill="#b8c02c" fill-opacity="0.55"/>
<rect x="1119.76" y="67.10" width="3.18" height="1.15" fill="#b8c02c" fill-opacity="0.55"/>
<rect x="1123.93" y="67.10" width="5.68" height="1.15" fill="#b8c02c" fill-opacity="0.55"/>
<rect x="1130.59" y="67.10" width="9.02" height="1.15" fill="#b8c02c" fill-opacity="0.55"/>
<rect x="1140.59" y="67.10" width="8.18" height="1.15" fill="#b8c02c" fill-opacity="0.55"/>
<rect x="1149.76" y="67.10" width="6.52" height="1.15" fill="#b8c02c" fill-opacity="0.55"/>
<rect x="1157.26" y="67.10" width="1.15" height="1.15" fill="#b8c02c" fill-opacity="0.55"/>
<rect x="1109.63" y="68.77" width="1.17" height="1.15" fill="#b8c02c" fill-opacity="0.55"/>
<rect x="1113.93" y="68.77" width="3.18" height="1.15" fill="#b8c02c" fill-opacity="0.55"/>
<rect x="1118.09" y="68.77" width="3.18" height="1.15" fill="#b8c02c" fill-opacity="0.55"/>
<rect x="1122.26" y="68.77" width="9.02" height="1.15" fill="#b8c02c" fill-opacity="0.55"/>
<rect x="1132.26" y="68.77" width="7.35" height="1.15" fill="#b8c02c" fill-opacity="0.55"/>
<rect x="1140.59" y="68.77" width="4.02" height="1.15" fill="#b8c02c" fill-opacity="0.55"/>
<rect x="1145.59" y="68.77" width="6.52" height="1.15" fill="#b8c02c" fill-opacity="0.55"/>
<rect x="1153.09" y="68.77" width="4.02" height="1.15" fill="#b8c02c" fill-opacity="0.55"/>
<rect x="1158.09" y="68.77" width="0.97" height="1.15" fill="#b8c02c" fill-opacity="0.55"/>
<rect x="1109.63" y="70.43" width="1.17" height="1.15" fill="#b8c02c" fill-opacity="0.55"/>
<rect x="1113.93" y="70.43" width="2.35" height="1.15" fill="#b8c02c" fill-opacity="0.55"/>
<rect x="1117.26" y="70.43" width="3.18" height="1.15" fill="#b8c02c" fill-opacity="0.55"/>
<rect x="1121.43" y="70.43" width="3.59" height="1.15" fill="#b8c02c" fill-opacity="0.55"/>
<rect x="1109.63" y="72.10" width="1.17" height="1.15" fill="#b8c02c" fill-opacity="0.55"/>
<rect x="1109.63" y="73.77" width="1.17" height="1.15" fill="#b8c02c" fill-opacity="0.55"/>
<rect x="1117.23" y="73.77" width="6.52" height="1.15" fill="#b8c02c" fill-opacity="0.55"/>
<rect x="1124.73" y="73.77" width="8.18" height="1.15" fill="#b8c02c" fill-opacity="0.55"/>
<rect x="1133.90" y="73.77" width="8.18" height="1.15" fill="#b8c02c" fill-opacity="0.55"/>
<rect x="1143.06" y="73.77" width="3.18" height="1.15" fill="#b8c02c" fill-opacity="0.55"/>
<rect x="1147.23" y="73.77" width="4.56" height="1.15" fill="#b8c02c" fill-opacity="0.55"/>
<rect x="1109.63" y="75.43" width="1.17" height="1.15" fill="#b8c02c" fill-opacity="0.55"/>
<rect x="1109.63" y="77.10" width="1.17" height="1.15" fill="#b8c02c" fill-opacity="0.55"/>
<rect x="1109.63" y="78.77" width="1.17" height="1.15" fill="#b8c02c" fill-opacity="0.55"/>
<rect x="1113.93" y="78.77" width="2.35" height="1.15" fill="#b8c02c" fill-opacity="0.55"/>
<rect x="1117.26" y="78.77" width="5.68" height="1.15" fill="#b8c02c" fill-opacity="0.55"/>
<rect x="1123.93" y="78.77" width="8.18" height="1.15" fill="#b8c02c" fill-opacity="0.55"/>
<rect x="1133.09" y="78.77" width="5.68" height="1.15" fill="#b8c02c" fill-opacity="0.55"/>
<rect x="1139.76" y="78.77" width="7.35" height="1.15" fill="#b8c02c" fill-opacity="0.55"/>
<rect x="1148.09" y="78.77" width="7.01" height="1.15" fill="#b8c02c" fill-opacity="0.55"/>
<rect x="1109.63" y="80.43" width="1.17" height="1.15" fill="#b8c02c" fill-opacity="0.55"/>
<rect x="1113.93" y="80.43" width="8.18" height="1.15" fill="#b8c02c" fill-opacity="0.55"/>
<rect x="1123.09" y="80.43" width="6.52" height="1.15" fill="#b8c02c" fill-opacity="0.55"/>
<rect x="1130.59" y="80.43" width="4.02" height="1.15" fill="#b8c02c" fill-opacity="0.55"/>
<rect x="1135.59" y="80.43" width="3.18" height="1.15" fill="#b8c02c" fill-opacity="0.55"/>
<rect x="1139.76" y="80.43" width="8.18" height="1.15" fill="#b8c02c" fill-opacity="0.55"/>
<rect x="1148.92" y="80.43" width="2.35" height="1.15" fill="#b8c02c" fill-opacity="0.55"/>
<rect x="1152.26" y="80.43" width="4.85" height="1.15" fill="#b8c02c" fill-opacity="0.55"/>
<rect x="1158.09" y="80.43" width="0.97" height="1.15" fill="#b8c02c" fill-opacity="0.55"/>
<rect x="1109.63" y="82.10" width="1.17" height="1.15" fill="#b8c02c" fill-opacity="0.55"/>
<rect x="1113.93" y="82.10" width="4.85" height="1.15" fill="#b8c02c" fill-opacity="0.55"/>
<rect x="1119.76" y="82.10" width="7.35" height="1.15" fill="#b8c02c" fill-opacity="0.55"/>
<rect x="1128.09" y="82.10" width="7.35" height="1.15" fill="#b8c02c" fill-opacity="0.55"/>
<rect x="1136.42" y="82.10" width="8.18" height="1.15" fill="#b8c02c" fill-opacity="0.55"/>
<rect x="1145.59" y="82.10" width="3.18" height="1.15" fill="#b8c02c" fill-opacity="0.55"/>
<rect x="1149.76" y="82.10" width="4.02" height="1.15" fill="#b8c02c" fill-opacity="0.55"/>
<rect x="1154.76" y="82.10" width="4.97" height="1.15" fill="#b8c02c" fill-opacity="0.55"/>
<rect x="1109.63" y="83.77" width="1.17" height="1.15" fill="#b8c02c" fill-opacity="0.55"/>
<rect x="1113.93" y="83.77" width="9.02" height="1.15" fill="#b8c02c" fill-opacity="0.55"/>
<rect x="1123.93" y="83.77" width="5.68" height="1.15" fill="#b8c02c" fill-opacity="0.55"/>
<rect x="1130.59" y="83.77" width="4.02" height="1.15" fill="#b8c02c" fill-opacity="0.55"/>
<rect x="1135.59" y="83.77" width="7.35" height="1.15" fill="#b8c02c" fill-opacity="0.55"/>
<rect x="1143.92" y="83.77" width="9.19" height="1.15" fill="#b8c02c" fill-opacity="0.55"/>
<rect x="1109.63" y="85.43" width="1.17" height="1.15" fill="#b8c02c" fill-opacity="0.55"/>
<rect x="1113.93" y="85.43" width="7.35" height="1.15" fill="#b8c02c" fill-opacity="0.55"/>
<rect x="1122.26" y="85.43" width="6.52" height="1.15" fill="#b8c02c" fill-opacity="0.55"/>
<rect x="1129.76" y="85.43" width="7.35" height="1.15" fill="#b8c02c" fill-opacity="0.55"/>
<rect x="1138.09" y="85.43" width="4.85" height="1.15" fill="#b8c02c" fill-opacity="0.55"/>
<rect x="1143.92" y="85.43" width="4.02" height="1.15" fill="#b8c02c" fill-opacity="0.55"/>
<rect x="1148.92" y="85.43" width="2.21" height="1.15" fill="#b8c02c" fill-opacity="0.55"/>
<rect x="1109.63" y="87.10" width="60.17" height="1.0" fill="#8e9624" fill-opacity="0.5"/>
<rect x="1109.96" y="92.10" width="4.81" height="1.15" fill="#e0c090" fill-opacity="0.55"/>
<rect x="1115.91" y="92.10" width="4.02" height="1.15" fill="#b4b4b4" fill-opacity="0.4"/>
<rect x="1120.91" y="92.10" width="4.85" height="1.15" fill="#b4b4b4" fill-opacity="0.4"/>
<rect x="1126.74" y="92.10" width="4.85" height="1.15" fill="#b4b4b4" fill-opacity="0.4"/>
<rect x="1132.58" y="92.10" width="1.37" height="1.15" fill="#b4b4b4" fill-opacity="0.4"/>
<rect x="1109.63" y="97.10" width="66.45" height="1.0" fill="#8e9624" fill-opacity="0.5"/>
<rect x="1109.96" y="98.77" width="0.84" height="1.15" fill="#b8c02c" fill-opacity="0.55"/>
<rect x="1109.96" y="100.43" width="0.84" height="1.15" fill="#b8c02c" fill-opacity="0.55"/>
<rect x="1111.94" y="100.43" width="5.68" height="1.15" fill="#c8ce30" fill-opacity="0.65"/>
<rect x="1118.61" y="100.43" width="5.68" height="1.15" fill="#c8ce30" fill-opacity="0.65"/>
<rect x="1125.27" y="100.43" width="2.35" height="1.15" fill="#c8ce30" fill-opacity="0.65"/>
<rect x="1128.61" y="100.43" width="4.01" height="1.15" fill="#c8ce30" fill-opacity="0.65"/>
<rect x="1109.96" y="102.10" width="0.84" height="1.15" fill="#b8c02c" fill-opacity="0.55"/>
<rect x="1109.63" y="103.77" width="66.45" height="1.0" fill="#8e9624" fill-opacity="0.5"/>
<rect x="1109.63" y="107.10" width="4.15" height="1.15" fill="#dcdcdc" fill-opacity="0.5"/>
<rect x="1114.92" y="107.10" width="6.52" height="1.15" fill="#e0584e" fill-opacity="0.58"/>
<rect x="1122.42" y="107.10" width="6.57" height="1.15" fill="#e0584e" fill-opacity="0.58"/>
<rect x="1130.12" y="107.10" width="4.02" height="1.15" fill="#dcdcdc" fill-opacity="0.5"/>
<rect x="1135.12" y="107.10" width="0.80" height="1.15" fill="#dcdcdc" fill-opacity="0.5"/>
<rect x="1137.07" y="107.10" width="2.35" height="1.15" fill="#e0584e" fill-opacity="0.58"/>
<rect x="1140.40" y="107.10" width="5.44" height="1.15" fill="#e0584e" fill-opacity="0.58"/>
<rect x="1146.32" y="107.10" width="0.51" height="1.15" fill="#b4b4b4" fill-opacity="0.4"/>
<rect x="1110.95" y="110.43" width="7.35" height="1.15" fill="#b8c02c" fill-opacity="0.55"/>
<rect x="1119.28" y="110.43" width="7.35" height="1.15" fill="#b8c02c" fill-opacity="0.55"/>
<rect x="1127.62" y="110.43" width="7.35" height="1.15" fill="#b8c02c" fill-opacity="0.55"/>
<rect x="1135.95" y="110.43" width="7.35" height="1.15" fill="#b8c02c" fill-opacity="0.55"/>
<rect x="1144.28" y="110.43" width="3.18" height="1.15" fill="#b8c02c" fill-opacity="0.55"/>
<rect x="1148.45" y="110.43" width="2.02" height="1.15" fill="#b8c02c" fill-opacity="0.55"/>
<rect x="1110.95" y="112.10" width="7.35" height="1.15" fill="#b4b4b4" fill-opacity="0.4"/>
<rect x="1119.28" y="112.10" width="2.35" height="1.15" fill="#b4b4b4" fill-opacity="0.4"/>
<rect x="1122.62" y="112.10" width="2.73" height="1.15" fill="#b4b4b4" fill-opacity="0.4"/>
<rect x="1126.16" y="112.10" width="3.18" height="1.15" fill="#e0584e" fill-opacity="0.58"/>
<rect x="1130.32" y="112.10" width="0.64" height="1.15" fill="#e0584e" fill-opacity="0.58"/>
<rect x="1132.11" y="112.10" width="3.16" height="1.15" fill="#a8bcd8" fill-opacity="0.48"/>
<rect x="1110.95" y="115.43" width="4.02" height="1.15" fill="#b8c02c" fill-opacity="0.55"/>
<rect x="1115.95" y="115.43" width="3.18" height="1.15" fill="#b8c02c" fill-opacity="0.55"/>
<rect x="1120.12" y="115.43" width="6.52" height="1.15" fill="#b8c02c" fill-opacity="0.55"/>
<rect x="1127.62" y="115.43" width="2.35" height="1.15" fill="#b8c02c" fill-opacity="0.55"/>
<rect x="1130.95" y="115.43" width="3.98" height="1.15" fill="#b8c02c" fill-opacity="0.55"/>
<rect x="1110.95" y="117.10" width="2.35" height="1.15" fill="#b4b4b4" fill-opacity="0.4"/>
<rect x="1114.28" y="117.10" width="4.02" height="1.15" fill="#b4b4b4" fill-opacity="0.4"/>
<rect x="1119.28" y="117.10" width="1.43" height="1.15" fill="#b4b4b4" fill-opacity="0.4"/>
<rect x="1110.95" y="118.77" width="4.15" height="1.15" fill="#b4b4b4" fill-opacity="0.4"/>
<rect x="1115.91" y="118.77" width="6.52" height="1.15" fill="#a8bcd8" fill-opacity="0.48"/>
<rect x="1123.41" y="118.77" width="2.35" height="1.15" fill="#a8bcd8" fill-opacity="0.48"/>
<rect x="1126.74" y="118.77" width="4.22" height="1.15" fill="#a8bcd8" fill-opacity="0.48"/>
<rect x="1110.95" y="122.10" width="4.85" height="1.15" fill="#b8c02c" fill-opacity="0.55"/>
<rect x="1116.78" y="122.10" width="7.35" height="1.15" fill="#b8c02c" fill-opacity="0.55"/>
<rect x="1125.12" y="122.10" width="4.02" height="1.15" fill="#b8c02c" fill-opacity="0.55"/>
<rect x="1130.12" y="122.10" width="5.68" height="1.15" fill="#b8c02c" fill-opacity="0.55"/>
<rect x="1136.78" y="122.10" width="6.52" height="1.15" fill="#b8c02c" fill-opacity="0.55"/>
<rect x="1144.28" y="122.10" width="6.52" height="1.15" fill="#b8c02c" fill-opacity="0.55"/>
<rect x="1151.78" y="122.10" width="8.18" height="1.15" fill="#b8c02c" fill-opacity="0.55"/>
<rect x="1160.95" y="122.10" width="3.18" height="1.15" fill="#b8c02c" fill-opacity="0.55"/>
<rect x="1165.11" y="122.10" width="3.18" height="1.15" fill="#b8c02c" fill-opacity="0.55"/>
<rect x="1169.28" y="122.10" width="6.64" height="1.15" fill="#b8c02c" fill-opacity="0.55"/>
<rect x="1113.93" y="123.77" width="8.18" height="1.15" fill="#b8c02c" fill-opacity="0.55"/>
<rect x="1123.09" y="123.77" width="6.22" height="1.15" fill="#b8c02c" fill-opacity="0.55"/>
<rect x="1110.95" y="125.43" width="8.18" height="1.15" fill="#b4b4b4" fill-opacity="0.4"/>
<rect x="1120.12" y="125.43" width="5.68" height="1.15" fill="#b4b4b4" fill-opacity="0.4"/>
<rect x="1126.78" y="125.43" width="3.85" height="1.15" fill="#b4b4b4" fill-opacity="0.4"/>
<rect x="1110.95" y="127.10" width="4.02" height="1.15" fill="#b4b4b4" fill-opacity="0.4"/>
<rect x="1115.95" y="127.10" width="3.18" height="1.15" fill="#b4b4b4" fill-opacity="0.4"/>
<rect x="1120.12" y="127.10" width="6.52" height="1.15" fill="#b4b4b4" fill-opacity="0.4"/>
<rect x="1127.62" y="127.10" width="3.35" height="1.15" fill="#b4b4b4" fill-opacity="0.4"/>
<rect x="1110.95" y="130.43" width="8.18" height="1.15" fill="#b8c02c" fill-opacity="0.55"/>
<rect x="1120.12" y="130.43" width="4.02" height="1.15" fill="#b8c02c" fill-opacity="0.55"/>
<rect x="1125.12" y="130.43" width="9.02" height="1.15" fill="#b8c02c" fill-opacity="0.55"/>
<rect x="1135.12" y="130.43" width="2.35" height="1.15" fill="#b8c02c" fill-opacity="0.55"/>
<rect x="1138.45" y="130.43" width="4.85" height="1.15" fill="#b8c02c" fill-opacity="0.55"/>
<rect x="1144.28" y="130.43" width="9.02" height="1.15" fill="#b8c02c" fill-opacity="0.55"/>
<rect x="1154.28" y="130.43" width="6.52" height="1.15" fill="#b8c02c" fill-opacity="0.55"/>
<rect x="1161.78" y="130.43" width="3.89" height="1.15" fill="#b8c02c" fill-opacity="0.55"/>
<rect x="1110.95" y="132.10" width="9.02" height="1.15" fill="#e0584e" fill-opacity="0.58"/>
<rect x="1120.95" y="132.10" width="2.35" height="1.15" fill="#e0584e" fill-opacity="0.58"/>
<rect x="1124.28" y="132.10" width="1.06" height="1.15" fill="#e0584e" fill-opacity="0.58"/>
<rect x="1126.16" y="132.10" width="1.17" height="1.15" fill="#b4b4b4" fill-opacity="0.4"/>
<rect x="1127.81" y="132.10" width="3.18" height="1.15" fill="#e0584e" fill-opacity="0.58"/>
<rect x="1131.98" y="132.10" width="5.93" height="1.15" fill="#e0584e" fill-opacity="0.58"/>
<rect x="1138.72" y="132.10" width="9.02" height="1.15" fill="#b4b4b4" fill-opacity="0.4"/>
<rect x="1148.72" y="132.10" width="7.04" height="1.15" fill="#b4b4b4" fill-opacity="0.4"/>
<rect x="1110.95" y="135.43" width="4.02" height="1.15" fill="#b8c02c" fill-opacity="0.55"/>
<rect x="1115.95" y="135.43" width="6.52" height="1.15" fill="#b8c02c" fill-opacity="0.55"/>
<rect x="1123.45" y="135.43" width="4.85" height="1.15" fill="#b8c02c" fill-opacity="0.55"/>
<rect x="1129.28" y="135.43" width="5.98" height="1.15" fill="#b8c02c" fill-opacity="0.55"/>
<rect x="1109.30" y="202.10" width="9.44" height="1.15" fill="#dcdcdc" fill-opacity="0.5"/>
<rect x="1120.87" y="202.10" width="9.02" height="1.15" fill="#b4b4b4" fill-opacity="0.4"/>
<rect x="1130.87" y="202.10" width="0.76" height="1.15" fill="#b4b4b4" fill-opacity="0.4"/>
<rect x="1110.95" y="205.43" width="4.85" height="1.15" fill="#b8c02c" fill-opacity="0.55"/>
<rect x="1116.78" y="205.43" width="4.85" height="1.15" fill="#b8c02c" fill-opacity="0.55"/>
<rect x="1122.62" y="205.43" width="3.39" height="1.15" fill="#b8c02c" fill-opacity="0.55"/>
<rect x="1110.95" y="207.10" width="3.82" height="1.15" fill="#dcdcdc" fill-opacity="0.5"/>
<rect x="1115.58" y="207.10" width="4.85" height="1.15" fill="#e0584e" fill-opacity="0.58"/>
<rect x="1121.41" y="207.10" width="4.85" height="1.15" fill="#e0584e" fill-opacity="0.58"/>
<rect x="1127.24" y="207.10" width="3.06" height="1.15" fill="#e0584e" fill-opacity="0.58"/>
<rect x="1131.12" y="207.10" width="9.11" height="1.15" fill="#a8bcd8" fill-opacity="0.48"/>
<rect x="1140.70" y="207.10" width="7.12" height="1.15" fill="#e0584e" fill-opacity="0.58"/>
<rect x="1148.64" y="207.10" width="2.35" height="1.15" fill="#e0c090" fill-opacity="0.55"/>
<rect x="1151.97" y="207.10" width="2.14" height="1.15" fill="#e0c090" fill-opacity="0.55"/>
<rect x="1114.26" y="208.77" width="6.46" height="1.15" fill="#dcdcdc" fill-opacity="0.5"/>
<rect x="1120.87" y="208.77" width="9.11" height="1.15" fill="#a8bcd8" fill-opacity="0.48"/>
<rect x="1112.93" y="210.43" width="7.12" height="1.15" fill="#b4b4b4" fill-opacity="0.4"/>
<rect x="1114.26" y="212.10" width="4.85" height="1.15" fill="#a8bcd8" fill-opacity="0.48"/>
<rect x="1120.09" y="212.10" width="4.60" height="1.15" fill="#a8bcd8" fill-opacity="0.48"/>
<rect x="1110.95" y="213.77" width="6.46" height="1.15" fill="#dcdcdc" fill-opacity="0.5"/>
<rect x="1119.55" y="213.77" width="7.12" height="1.15" fill="#b4b4b4" fill-opacity="0.4"/>
<rect x="1110.95" y="217.10" width="63.80" height="1.0" fill="#8e9624" fill-opacity="0.5"/>
<rect x="1111.94" y="218.77" width="2.49" height="1.15" fill="#b8c02c" fill-opacity="0.55"/>
<rect x="1115.25" y="218.77" width="3.82" height="1.15" fill="#a8bcd8" fill-opacity="0.48"/>
<rect x="1120.87" y="218.77" width="4.85" height="1.15" fill="#b8c02c" fill-opacity="0.55"/>
<rect x="1126.70" y="218.77" width="0.63" height="1.15" fill="#b8c02c" fill-opacity="0.55"/>
<rect x="1130.12" y="218.77" width="5.14" height="1.15" fill="#b8c02c" fill-opacity="0.55"/>
<rect x="1136.07" y="218.77" width="5.80" height="1.15" fill="#b8c02c" fill-opacity="0.55"/>
<rect x="1144.01" y="218.77" width="4.85" height="1.15" fill="#b8c02c" fill-opacity="0.55"/>
<rect x="1149.84" y="218.77" width="0.96" height="1.15" fill="#b8c02c" fill-opacity="0.55"/>
<rect x="1110.95" y="220.44" width="62.15" height="1.0" fill="#8e9624" fill-opacity="0.5"/>
<rect x="1111.94" y="222.10" width="4.85" height="1.15" fill="#c8ce30" fill-opacity="0.65"/>
<rect x="1117.78" y="222.10" width="8.18" height="1.15" fill="#c8ce30" fill-opacity="0.65"/>
<rect x="1126.94" y="222.10" width="2.35" height="1.15" fill="#c8ce30" fill-opacity="0.65"/>
<rect x="1130.27" y="222.10" width="8.18" height="1.15" fill="#c8ce30" fill-opacity="0.65"/>
<rect x="1139.44" y="222.10" width="6.52" height="1.15" fill="#c8ce30" fill-opacity="0.65"/>
<rect x="1146.94" y="222.10" width="3.18" height="1.15" fill="#c8ce30" fill-opacity="0.65"/>
<rect x="1151.11" y="222.10" width="3.18" height="1.15" fill="#c8ce30" fill-opacity="0.65"/>
<rect x="1155.27" y="222.10" width="6.44" height="1.15" fill="#c8ce30" fill-opacity="0.65"/>
<rect x="1111.94" y="223.77" width="2.83" height="1.15" fill="#a8bcd8" fill-opacity="0.48"/>
<rect x="1115.58" y="223.77" width="8.18" height="1.15" fill="#b8c02c" fill-opacity="0.55"/>
<rect x="1124.74" y="223.77" width="4.02" height="1.15" fill="#b8c02c" fill-opacity="0.55"/>
<rect x="1129.74" y="223.77" width="7.35" height="1.15" fill="#b8c02c" fill-opacity="0.55"/>
<rect x="1138.08" y="223.77" width="6.52" height="1.15" fill="#b8c02c" fill-opacity="0.55"/>
<rect x="1145.58" y="223.77" width="3.18" height="1.15" fill="#b8c02c" fill-opacity="0.55"/>
<rect x="1149.74" y="223.77" width="7.35" height="1.15" fill="#b8c02c" fill-opacity="0.55"/>
<rect x="1158.08" y="223.77" width="8.18" height="1.15" fill="#b8c02c" fill-opacity="0.55"/>
<rect x="1167.24" y="223.77" width="3.72" height="1.15" fill="#b8c02c" fill-opacity="0.55"/>
<rect x="1111.94" y="225.44" width="3.18" height="1.15" fill="#b8c02c" fill-opacity="0.55"/>
<rect x="1116.11" y="225.44" width="4.02" height="1.15" fill="#b8c02c" fill-opacity="0.55"/>
<rect x="1121.11" y="225.44" width="4.02" height="1.15" fill="#b8c02c" fill-opacity="0.55"/>
<rect x="1126.11" y="225.44" width="5.19" height="1.15" fill="#b8c02c" fill-opacity="0.55"/>
<rect x="1111.94" y="227.10" width="63.47" height="1.0" fill="#8e9624" fill-opacity="0.5"/>
<rect x="1111.94" y="230.44" width="2.83" height="1.15" fill="#dcdcdc" fill-opacity="0.5"/>
<rect x="1115.91" y="230.44" width="4.02" height="1.15" fill="#e0584e" fill-opacity="0.58"/>
<rect x="1120.91" y="230.44" width="9.73" height="1.15" fill="#e0584e" fill-opacity="0.58"/>
<rect x="1132.77" y="230.44" width="4.02" height="1.15" fill="#a8bcd8" fill-opacity="0.48"/>
<rect x="1137.77" y="230.44" width="8.18" height="1.15" fill="#a8bcd8" fill-opacity="0.48"/>
<rect x="1146.93" y="230.44" width="0.89" height="1.15" fill="#a8bcd8" fill-opacity="0.48"/>
<rect x="1113.60" y="232.10" width="4.02" height="1.15" fill="#b8c02c" fill-opacity="0.55"/>
<rect x="1118.59" y="232.10" width="9.02" height="1.15" fill="#b8c02c" fill-opacity="0.55"/>
<rect x="1128.59" y="232.10" width="9.02" height="1.15" fill="#b8c02c" fill-opacity="0.55"/>
<rect x="1138.59" y="232.10" width="4.02" height="1.15" fill="#b8c02c" fill-opacity="0.55"/>
<rect x="1143.59" y="232.10" width="2.35" height="1.15" fill="#b8c02c" fill-opacity="0.55"/>
<rect x="1146.93" y="232.10" width="2.35" height="1.15" fill="#b8c02c" fill-opacity="0.55"/>
<rect x="1150.26" y="232.10" width="3.18" height="1.15" fill="#b8c02c" fill-opacity="0.55"/>
<rect x="1154.43" y="232.10" width="5.96" height="1.15" fill="#b8c02c" fill-opacity="0.55"/>
<rect x="1113.60" y="233.77" width="4.02" height="1.15" fill="#a8bcd8" fill-opacity="0.48"/>
<rect x="1118.59" y="233.77" width="1.46" height="1.15" fill="#a8bcd8" fill-opacity="0.48"/>
<rect x="1122.85" y="233.77" width="4.85" height="1.15" fill="#e0584e" fill-opacity="0.58"/>
<rect x="1128.68" y="233.77" width="3.93" height="1.15" fill="#e0584e" fill-opacity="0.58"/>
<rect x="1134.09" y="233.77" width="2.35" height="1.15" fill="#b4b4b4" fill-opacity="0.4"/>
<rect x="1137.42" y="233.77" width="3.13" height="1.15" fill="#b4b4b4" fill-opacity="0.4"/>
<rect x="1141.69" y="233.77" width="6.13" height="1.15" fill="#a8bcd8" fill-opacity="0.48"/>
<rect x="1148.64" y="233.77" width="5.68" height="1.15" fill="#d8b830" fill-opacity="0.6"/>
<rect x="1155.30" y="233.77" width="1.78" height="1.15" fill="#d8b830" fill-opacity="0.6"/>
<rect x="1157.89" y="233.77" width="4.48" height="1.15" fill="#dcdcdc" fill-opacity="0.5"/>
<rect x="1113.60" y="235.44" width="6.52" height="1.15" fill="#b4b4b4" fill-opacity="0.4"/>
<rect x="1121.09" y="235.44" width="3.59" height="1.15" fill="#b4b4b4" fill-opacity="0.4"/>
<rect x="1115.25" y="237.10" width="7.45" height="1.15" fill="#b4b4b4" fill-opacity="0.4"/>
<rect x="1124.17" y="237.10" width="7.35" height="1.15" fill="#b4b4b4" fill-opacity="0.4"/>
<rect x="1132.51" y="237.10" width="4.02" height="1.15" fill="#b4b4b4" fill-opacity="0.4"/>
<rect x="1137.51" y="237.10" width="3.05" height="1.15" fill="#b4b4b4" fill-opacity="0.4"/>
<rect x="1141.69" y="237.10" width="8.11" height="1.15" fill="#a8bcd8" fill-opacity="0.48"/>
<rect x="1154.59" y="237.10" width="6.13" height="1.15" fill="#e0c090" fill-opacity="0.55"/>
<rect x="1115.58" y="238.77" width="9.02" height="1.15" fill="#b8c02c" fill-opacity="0.55"/>
<rect x="1125.58" y="238.77" width="7.35" height="1.15" fill="#b8c02c" fill-opacity="0.55"/>
<rect x="1133.91" y="238.77" width="6.64" height="1.15" fill="#b8c02c" fill-opacity="0.55"/>
<rect x="1115.58" y="240.44" width="4.02" height="1.15" fill="#a8bcd8" fill-opacity="0.48"/>
<rect x="1120.58" y="240.44" width="9.02" height="1.15" fill="#a8bcd8" fill-opacity="0.48"/>
<rect x="1130.58" y="240.44" width="5.35" height="1.15" fill="#a8bcd8" fill-opacity="0.48"/>
<rect x="1136.74" y="240.44" width="9.02" height="1.15" fill="#d8b830" fill-opacity="0.6"/>
<rect x="1146.74" y="240.44" width="5.72" height="1.15" fill="#d8b830" fill-opacity="0.6"/>
<rect x="1115.58" y="242.10" width="2.35" height="1.15" fill="#a8bcd8" fill-opacity="0.48"/>
<rect x="1118.91" y="242.10" width="2.47" height="1.15" fill="#a8bcd8" fill-opacity="0.48"/>
<rect x="1122.85" y="242.10" width="4.48" height="1.15" fill="#a8bcd8" fill-opacity="0.48"/>
<rect x="1132.77" y="242.10" width="2.35" height="1.15" fill="#a8bcd8" fill-opacity="0.48"/>
<rect x="1136.10" y="242.10" width="4.02" height="1.15" fill="#a8bcd8" fill-opacity="0.48"/>
<rect x="1141.10" y="242.10" width="3.42" height="1.15" fill="#a8bcd8" fill-opacity="0.48"/>
<rect x="1115.58" y="243.77" width="4.02" height="1.15" fill="#b4b4b4" fill-opacity="0.4"/>
<rect x="1120.58" y="243.77" width="0.80" height="1.15" fill="#b4b4b4" fill-opacity="0.4"/>
<rect x="1122.85" y="243.77" width="4.48" height="1.15" fill="#b4b4b4" fill-opacity="0.4"/>
<rect x="1132.77" y="243.77" width="9.02" height="1.15" fill="#e0584e" fill-opacity="0.58"/>
<rect x="1142.77" y="243.77" width="1.75" height="1.15" fill="#e0584e" fill-opacity="0.58"/>
<rect x="1145.33" y="243.77" width="6.52" height="1.15" fill="#b4b4b4" fill-opacity="0.4"/>
<rect x="1152.83" y="243.77" width="4.91" height="1.15" fill="#b4b4b4" fill-opacity="0.4"/>
<rect x="1115.58" y="245.44" width="5.80" height="1.15" fill="#b4b4b4" fill-opacity="0.4"/>
<rect x="1122.85" y="245.44" width="4.48" height="1.15" fill="#b4b4b4" fill-opacity="0.4"/>
<rect x="1132.77" y="245.44" width="8.18" height="1.15" fill="#e0584e" fill-opacity="0.58"/>
<rect x="1141.93" y="245.44" width="3.18" height="1.15" fill="#e0584e" fill-opacity="0.58"/>
<rect x="1146.10" y="245.44" width="1.06" height="1.15" fill="#e0584e" fill-opacity="0.58"/>
<rect x="1153.26" y="245.44" width="2.35" height="1.15" fill="#c8ce30" fill-opacity="0.65"/>
<rect x="1156.60" y="245.44" width="4.85" height="1.15" fill="#c8ce30" fill-opacity="0.65"/>
<rect x="1162.43" y="245.44" width="4.85" height="1.15" fill="#c8ce30" fill-opacity="0.65"/>
<rect x="1168.26" y="245.44" width="5.68" height="1.15" fill="#c8ce30" fill-opacity="0.65"/>
<rect x="1174.93" y="245.44" width="2.35" height="1.15" fill="#c8ce30" fill-opacity="0.65"/>
<rect x="1178.26" y="245.44" width="0.64" height="1.15" fill="#c8ce30" fill-opacity="0.65"/>
<rect x="1115.58" y="247.10" width="5.80" height="1.15" fill="#b4b4b4" fill-opacity="0.4"/>
<rect x="1122.85" y="247.10" width="4.48" height="1.15" fill="#b4b4b4" fill-opacity="0.4"/>
<rect x="1132.77" y="247.10" width="9.02" height="1.15" fill="#e0584e" fill-opacity="0.58"/>
<rect x="1142.77" y="247.10" width="2.35" height="1.15" fill="#e0584e" fill-opacity="0.58"/>
<rect x="1146.10" y="247.10" width="1.06" height="1.15" fill="#e0584e" fill-opacity="0.58"/>
<rect x="1115.58" y="248.77" width="6.46" height="1.15" fill="#b4b4b4" fill-opacity="0.4"/>
<rect x="1124.17" y="248.77" width="6.52" height="1.15" fill="#b4b4b4" fill-opacity="0.4"/>
<rect x="1131.67" y="248.77" width="8.88" height="1.15" fill="#b4b4b4" fill-opacity="0.4"/>
<rect x="1141.69" y="248.77" width="8.11" height="1.15" fill="#a8bcd8" fill-opacity="0.48"/>
<rect x="1151.28" y="248.77" width="5.14" height="1.15" fill="#b4b4b4" fill-opacity="0.4"/>
<rect x="1115.25" y="250.44" width="5.68" height="1.15" fill="#b8c02c" fill-opacity="0.55"/>
<rect x="1121.91" y="250.44" width="8.18" height="1.15" fill="#b8c02c" fill-opacity="0.55"/>
<rect x="1131.08" y="250.44" width="8.15" height="1.15" fill="#b8c02c" fill-opacity="0.55"/>
<rect x="1115.58" y="252.10" width="9.02" height="1.15" fill="#b4b4b4" fill-opacity="0.4"/>
<rect x="1125.58" y="252.10" width="8.18" height="1.15" fill="#b4b4b4" fill-opacity="0.4"/>
<rect x="1134.74" y="252.10" width="1.18" height="1.15" fill="#b4b4b4" fill-opacity="0.4"/>
<rect x="1136.07" y="252.10" width="4.48" height="1.15" fill="#e0c090" fill-opacity="0.55"/>
<rect x="1116.90" y="253.77" width="9.02" height="1.15" fill="#a8bcd8" fill-opacity="0.48"/>
<rect x="1126.90" y="253.77" width="5.68" height="1.15" fill="#a8bcd8" fill-opacity="0.48"/>
<rect x="1133.57" y="253.77" width="8.97" height="1.15" fill="#a8bcd8" fill-opacity="0.48"/>
<rect x="1115.25" y="255.44" width="3.49" height="1.15" fill="#b4b4b4" fill-opacity="0.4"/>
<rect x="1116.90" y="257.10" width="8.18" height="1.15" fill="#a8bcd8" fill-opacity="0.48"/>
<rect x="1126.07" y="257.10" width="4.02" height="1.15" fill="#a8bcd8" fill-opacity="0.48"/>
<rect x="1131.07" y="257.10" width="7.35" height="1.15" fill="#a8bcd8" fill-opacity="0.48"/>
<rect x="1139.40" y="257.10" width="3.14" height="1.15" fill="#a8bcd8" fill-opacity="0.48"/>
<rect x="1115.25" y="260.44" width="7.35" height="1.15" fill="#b4b4b4" fill-opacity="0.4"/>
<rect x="1123.58" y="260.44" width="8.18" height="1.15" fill="#b4b4b4" fill-opacity="0.4"/>
<rect x="1132.75" y="260.44" width="7.81" height="1.15" fill="#b4b4b4" fill-opacity="0.4"/>
<rect x="1141.69" y="260.44" width="3.18" height="1.15" fill="#a8bcd8" fill-opacity="0.48"/>
<rect x="1145.86" y="260.44" width="3.95" height="1.15" fill="#a8bcd8" fill-opacity="0.48"/>
<rect x="1150.62" y="260.44" width="6.46" height="1.15" fill="#b4b4b4" fill-opacity="0.4"/>
<rect x="1115.25" y="262.10" width="3.18" height="1.15" fill="#b4b4b4" fill-opacity="0.4"/>
<rect x="1119.41" y="262.10" width="5.27" height="1.15" fill="#b4b4b4" fill-opacity="0.4"/>
<rect x="1116.90" y="263.77" width="5.68" height="1.15" fill="#b4b4b4" fill-opacity="0.4"/>
<rect x="1123.57" y="263.77" width="3.18" height="1.15" fill="#b4b4b4" fill-opacity="0.4"/>
<rect x="1127.73" y="263.77" width="4.02" height="1.15" fill="#b4b4b4" fill-opacity="0.4"/>
<rect x="1132.73" y="263.77" width="3.85" height="1.15" fill="#b4b4b4" fill-opacity="0.4"/>
<rect x="1116.90" y="265.44" width="4.02" height="1.15" fill="#d8b830" fill-opacity="0.6"/>
<rect x="1121.90" y="265.44" width="5.68" height="1.15" fill="#d8b830" fill-opacity="0.6"/>
<rect x="1128.57" y="265.44" width="4.02" height="1.15" fill="#d8b830" fill-opacity="0.6"/>
<rect x="1133.57" y="265.44" width="8.18" height="1.15" fill="#d8b830" fill-opacity="0.6"/>
<rect x="1142.73" y="265.44" width="4.85" height="1.15" fill="#d8b830" fill-opacity="0.6"/>
<rect x="1148.57" y="265.44" width="3.89" height="1.15" fill="#d8b830" fill-opacity="0.6"/>
<rect x="1118.22" y="267.10" width="7.35" height="1.15" fill="#b4b4b4" fill-opacity="0.4"/>
<rect x="1126.56" y="267.10" width="8.18" height="1.15" fill="#b4b4b4" fill-opacity="0.4"/>
<rect x="1135.72" y="267.10" width="4.02" height="1.15" fill="#b4b4b4" fill-opacity="0.4"/>
<rect x="1140.72" y="267.10" width="1.81" height="1.15" fill="#b4b4b4" fill-opacity="0.4"/>
<rect x="1115.25" y="268.77" width="4.02" height="1.15" fill="#b4b4b4" fill-opacity="0.4"/>
<rect x="1120.25" y="268.77" width="7.35" height="1.15" fill="#b4b4b4" fill-opacity="0.4"/>
<rect x="1128.58" y="268.77" width="1.39" height="1.15" fill="#b4b4b4" fill-opacity="0.4"/>
<rect x="1116.90" y="270.44" width="7.35" height="1.15" fill="#a8bcd8" fill-opacity="0.48"/>
<rect x="1125.23" y="270.44" width="4.74" height="1.15" fill="#a8bcd8" fill-opacity="0.48"/>
<rect x="1115.25" y="272.10" width="7.35" height="1.15" fill="#b4b4b4" fill-opacity="0.4"/>
<rect x="1123.58" y="272.10" width="4.85" height="1.15" fill="#b4b4b4" fill-opacity="0.4"/>
<rect x="1129.41" y="272.10" width="2.54" height="1.15" fill="#b4b4b4" fill-opacity="0.4"/>
<rect x="1116.90" y="273.77" width="6.52" height="1.15" fill="#a8bcd8" fill-opacity="0.48"/>
<rect x="1124.40" y="273.77" width="3.18" height="1.15" fill="#a8bcd8" fill-opacity="0.48"/>
<rect x="1128.57" y="273.77" width="0.75" height="1.15" fill="#a8bcd8" fill-opacity="0.48"/>
<rect x="1115.25" y="275.44" width="2.35" height="1.15" fill="#b8c02c" fill-opacity="0.55"/>
<rect x="1118.58" y="275.44" width="6.52" height="1.15" fill="#b8c02c" fill-opacity="0.55"/>
<rect x="1126.08" y="275.44" width="9.02" height="1.15" fill="#b8c02c" fill-opacity="0.55"/>
<rect x="1136.08" y="275.44" width="8.18" height="1.15" fill="#b8c02c" fill-opacity="0.55"/>
<rect x="1145.25" y="275.44" width="8.53" height="1.15" fill="#b8c02c" fill-opacity="0.55"/>
<rect x="1115.25" y="277.10" width="2.35" height="1.15" fill="#b4b4b4" fill-opacity="0.4"/>
<rect x="1118.58" y="277.10" width="7.35" height="1.15" fill="#b4b4b4" fill-opacity="0.4"/>
<rect x="1126.91" y="277.10" width="6.52" height="1.15" fill="#b4b4b4" fill-opacity="0.4"/>
<rect x="1134.41" y="277.10" width="9.02" height="1.15" fill="#b4b4b4" fill-opacity="0.4"/>
<rect x="1144.41" y="277.10" width="0.77" height="1.15" fill="#b4b4b4" fill-opacity="0.4"/>
<rect x="1115.58" y="278.77" width="9.02" height="1.15" fill="#a8bcd8" fill-opacity="0.48"/>
<rect x="1125.58" y="278.77" width="3.18" height="1.15" fill="#a8bcd8" fill-opacity="0.48"/>
<rect x="1129.74" y="278.77" width="2.21" height="1.15" fill="#a8bcd8" fill-opacity="0.48"/>
<rect x="1115.25" y="280.44" width="4.85" height="1.15" fill="#b4b4b4" fill-opacity="0.4"/>
<rect x="1121.08" y="280.44" width="2.28" height="1.15" fill="#b4b4b4" fill-opacity="0.4"/>
<rect x="1113.60" y="282.10" width="2.49" height="1.15" fill="#b4b4b4" fill-opacity="0.4"/>
<rect x="1111.94" y="283.77" width="6.13" height="1.15" fill="#dcdcdc" fill-opacity="0.5"/>
<rect x="1119.88" y="283.77" width="5.68" height="1.15" fill="#b4b4b4" fill-opacity="0.4"/>
<rect x="1126.54" y="283.77" width="2.35" height="1.15" fill="#b4b4b4" fill-opacity="0.4"/>
<rect x="1129.88" y="283.77" width="3.40" height="1.15" fill="#b4b4b4" fill-opacity="0.4"/>
<rect x="1111.61" y="287.10" width="63.14" height="1.0" fill="#8e9624" fill-opacity="0.5"/>
<rect x="1111.94" y="288.77" width="2.83" height="1.15" fill="#b8c02c" fill-opacity="0.55"/>
<rect x="1115.58" y="288.77" width="3.16" height="1.15" fill="#a8bcd8" fill-opacity="0.48"/>
<rect x="1120.21" y="288.77" width="7.35" height="1.15" fill="#b8c02c" fill-opacity="0.55"/>
<rect x="1128.54" y="288.77" width="5.68" height="1.15" fill="#b8c02c" fill-opacity="0.55"/>
<rect x="1135.21" y="288.77" width="7.35" height="1.15" fill="#b8c02c" fill-opacity="0.55"/>
<rect x="1143.54" y="288.77" width="4.02" height="1.15" fill="#b8c02c" fill-opacity="0.55"/>
<rect x="1148.54" y="288.77" width="9.02" height="1.15" fill="#b8c02c" fill-opacity="0.55"/>
<rect x="1158.54" y="288.77" width="4.16" height="1.15" fill="#b8c02c" fill-opacity="0.55"/>
<rect x="1111.94" y="290.44" width="61.16" height="1.0" fill="#8e9624" fill-opacity="0.5"/>
<rect x="1111.94" y="292.10" width="8.18" height="1.15" fill="#b8c02c" fill-opacity="0.55"/>
<rect x="1121.11" y="292.10" width="6.52" height="1.15" fill="#b8c02c" fill-opacity="0.55"/>
<rect x="1128.61" y="292.10" width="3.18" height="1.15" fill="#b8c02c" fill-opacity="0.55"/>
<rect x="1132.77" y="292.10" width="5.68" height="1.15" fill="#b8c02c" fill-opacity="0.55"/>
<rect x="1139.44" y="292.10" width="2.35" height="1.15" fill="#b8c02c" fill-opacity="0.55"/>
<rect x="1142.77" y="292.10" width="4.02" height="1.15" fill="#b8c02c" fill-opacity="0.55"/>
<rect x="1147.77" y="292.10" width="7.35" height="1.15" fill="#b8c02c" fill-opacity="0.55"/>
<rect x="1156.11" y="292.10" width="1.64" height="1.15" fill="#b8c02c" fill-opacity="0.55"/>
<rect x="1111.94" y="293.77" width="63.14" height="1.0" fill="#8e9624" fill-opacity="0.5"/>
<rect x="1110.95" y="297.10" width="5.68" height="1.15" fill="#b8c02c" fill-opacity="0.55"/>
<rect x="1117.62" y="297.10" width="2.35" height="1.15" fill="#b8c02c" fill-opacity="0.55"/>
<rect x="1120.95" y="297.10" width="3.18" height="1.15" fill="#b8c02c" fill-opacity="0.55"/>
<rect x="1125.12" y="297.10" width="5.68" height="1.15" fill="#b8c02c" fill-opacity="0.55"/>
<rect x="1131.78" y="297.10" width="4.14" height="1.15" fill="#b8c02c" fill-opacity="0.55"/>
<rect x="1110.95" y="298.77" width="4.85" height="1.15" fill="#dcdcdc" fill-opacity="0.5"/>
<rect x="1116.78" y="298.77" width="3.18" height="1.15" fill="#dcdcdc" fill-opacity="0.5"/>
<rect x="1120.95" y="298.77" width="1.09" height="1.15" fill="#dcdcdc" fill-opacity="0.5"/>
<rect x="1123.18" y="298.77" width="3.18" height="1.15" fill="#e0584e" fill-opacity="0.58"/>
<rect x="1127.35" y="298.77" width="8.18" height="1.15" fill="#e0584e" fill-opacity="0.58"/>
<rect x="1136.51" y="298.77" width="0.73" height="1.15" fill="#e0584e" fill-opacity="0.58"/>
<rect x="1138.39" y="298.77" width="6.52" height="1.15" fill="#a8bcd8" fill-opacity="0.48"/>
<rect x="1145.89" y="298.77" width="7.56" height="1.15" fill="#a8bcd8" fill-opacity="0.48"/>
<rect x="1112.93" y="300.44" width="7.35" height="1.15" fill="#b8c02c" fill-opacity="0.55"/>
<rect x="1121.27" y="300.44" width="6.39" height="1.15" fill="#b8c02c" fill-opacity="0.55"/>
<rect x="1110.95" y="302.10" width="4.02" height="1.15" fill="#b4b4b4" fill-opacity="0.4"/>
<rect x="1115.95" y="302.10" width="2.35" height="1.15" fill="#b4b4b4" fill-opacity="0.4"/>
<rect x="1119.28" y="302.10" width="9.02" height="1.15" fill="#b4b4b4" fill-opacity="0.4"/>
<rect x="1129.28" y="302.10" width="5.32" height="1.15" fill="#b4b4b4" fill-opacity="0.4"/>
<rect x="1110.95" y="305.44" width="62.81" height="1.0" fill="#8e9624" fill-opacity="0.5"/>
<rect x="1110.95" y="307.10" width="3.16" height="1.15" fill="#b8c02c" fill-opacity="0.55"/>
<rect x="1114.59" y="307.10" width="3.16" height="1.15" fill="#a8bcd8" fill-opacity="0.48"/>
<rect x="1120.21" y="307.10" width="5.68" height="1.15" fill="#b8c02c" fill-opacity="0.55"/>
<rect x="1126.87" y="307.10" width="2.35" height="1.15" fill="#b8c02c" fill-opacity="0.55"/>
<rect x="1130.21" y="307.10" width="4.02" height="1.15" fill="#b8c02c" fill-opacity="0.55"/>
<rect x="1135.21" y="307.10" width="4.85" height="1.15" fill="#b8c02c" fill-opacity="0.55"/>
<rect x="1141.04" y="307.10" width="5.68" height="1.15" fill="#b8c02c" fill-opacity="0.55"/>
<rect x="1147.71" y="307.10" width="5.68" height="1.15" fill="#b8c02c" fill-opacity="0.55"/>
<rect x="1154.37" y="307.10" width="3.37" height="1.15" fill="#b8c02c" fill-opacity="0.55"/>
<rect x="1110.95" y="308.77" width="61.16" height="1.0" fill="#8e9624" fill-opacity="0.5"/>
<rect x="1110.95" y="310.44" width="4.85" height="1.15" fill="#b8c02c" fill-opacity="0.55"/>
<rect x="1116.78" y="310.44" width="5.68" height="1.15" fill="#b8c02c" fill-opacity="0.55"/>
<rect x="1123.45" y="310.44" width="8.18" height="1.15" fill="#b8c02c" fill-opacity="0.55"/>
<rect x="1132.62" y="310.44" width="9.02" height="1.15" fill="#b8c02c" fill-opacity="0.55"/>
<rect x="1142.62" y="310.44" width="4.02" height="1.15" fill="#b8c02c" fill-opacity="0.55"/>
<rect x="1147.62" y="310.44" width="5.68" height="1.15" fill="#b8c02c" fill-opacity="0.55"/>
<rect x="1154.28" y="310.44" width="6.52" height="1.15" fill="#b8c02c" fill-opacity="0.55"/>
<rect x="1161.78" y="310.44" width="2.35" height="1.15" fill="#b8c02c" fill-opacity="0.55"/>
<rect x="1165.11" y="310.44" width="1.88" height="1.15" fill="#b8c02c" fill-opacity="0.55"/>
<rect x="1110.95" y="312.10" width="2.35" height="1.15" fill="#b8c02c" fill-opacity="0.55"/>
<rect x="1114.28" y="312.10" width="2.35" height="1.15" fill="#b8c02c" fill-opacity="0.55"/>
<rect x="1117.62" y="312.10" width="2.35" height="1.15" fill="#b8c02c" fill-opacity="0.55"/>
<rect x="1120.95" y="312.10" width="9.02" height="1.15" fill="#b8c02c" fill-opacity="0.55"/>
<rect x="1130.95" y="312.10" width="9.02" height="1.15" fill="#b8c02c" fill-opacity="0.55"/>
<rect x="1140.95" y="312.10" width="4.85" height="1.15" fill="#b8c02c" fill-opacity="0.55"/>
<rect x="1146.78" y="312.10" width="9.02" height="1.15" fill="#b8c02c" fill-opacity="0.55"/>
<rect x="1156.78" y="312.10" width="8.18" height="1.15" fill="#b8c02c" fill-opacity="0.55"/>
<rect x="1165.95" y="312.10" width="6.01" height="1.15" fill="#b8c02c" fill-opacity="0.55"/>
<rect x="1110.95" y="313.77" width="3.82" height="1.15" fill="#b8c02c" fill-opacity="0.55"/>
<rect x="1110.95" y="315.44" width="63.47" height="1.0" fill="#8e9624" fill-opacity="0.5"/>
<rect x="1110.95" y="318.77" width="3.18" height="1.15" fill="#b8c02c" fill-opacity="0.55"/>
<rect x="1115.12" y="318.77" width="7.35" height="1.15" fill="#b8c02c" fill-opacity="0.55"/>
<rect x="1123.45" y="318.77" width="8.18" height="1.15" fill="#b8c02c" fill-opacity="0.55"/>
<rect x="1132.62" y="318.77" width="1.32" height="1.15" fill="#b8c02c" fill-opacity="0.55"/>
<rect x="1110.95" y="320.44" width="7.35" height="1.15" fill="#dcdcdc" fill-opacity="0.5"/>
<rect x="1119.28" y="320.44" width="2.10" height="1.15" fill="#dcdcdc" fill-opacity="0.5"/>
<rect x="1122.85" y="320.44" width="5.68" height="1.15" fill="#e0584e" fill-opacity="0.58"/>
<rect x="1129.52" y="320.44" width="4.85" height="1.15" fill="#e0584e" fill-opacity="0.58"/>
<rect x="1135.35" y="320.44" width="2.56" height="1.15" fill="#e0584e" fill-opacity="0.58"/>
<rect x="1138.72" y="320.44" width="6.52" height="1.15" fill="#a8bcd8" fill-opacity="0.48"/>
<rect x="1146.22" y="320.44" width="4.85" height="1.15" fill="#a8bcd8" fill-opacity="0.48"/>
<rect x="1152.05" y="320.44" width="3.05" height="1.15" fill="#a8bcd8" fill-opacity="0.48"/>
<rect x="1112.93" y="322.10" width="7.35" height="1.15" fill="#e0584e" fill-opacity="0.58"/>
<rect x="1121.27" y="322.10" width="6.72" height="1.15" fill="#e0584e" fill-opacity="0.58"/>
<rect x="1128.80" y="322.10" width="2.35" height="1.15" fill="#a8bcd8" fill-opacity="0.48"/>
<rect x="1132.13" y="322.10" width="3.79" height="1.15" fill="#a8bcd8" fill-opacity="0.48"/>
<rect x="1110.95" y="323.77" width="2.35" height="1.15" fill="#b4b4b4" fill-opacity="0.4"/>
<rect x="1114.28" y="323.77" width="3.18" height="1.15" fill="#b4b4b4" fill-opacity="0.4"/>
<rect x="1118.45" y="323.77" width="5.68" height="1.15" fill="#b4b4b4" fill-opacity="0.4"/>
<rect x="1125.12" y="323.77" width="7.35" height="1.15" fill="#b4b4b4" fill-opacity="0.4"/>
<rect x="1133.45" y="323.77" width="2.47" height="1.15" fill="#b4b4b4" fill-opacity="0.4"/>
<rect x="1110.95" y="327.10" width="2.35" height="1.15" fill="#b8c02c" fill-opacity="0.55"/>
<rect x="1114.28" y="327.10" width="3.18" height="1.15" fill="#b8c02c" fill-opacity="0.55"/>
<rect x="1118.45" y="327.10" width="7.35" height="1.15" fill="#b8c02c" fill-opacity="0.55"/>
<rect x="1126.78" y="327.10" width="2.20" height="1.15" fill="#b8c02c" fill-opacity="0.55"/>
<rect x="1110.95" y="328.77" width="5.68" height="1.15" fill="#dcdcdc" fill-opacity="0.5"/>
<rect x="1117.62" y="328.77" width="3.76" height="1.15" fill="#dcdcdc" fill-opacity="0.5"/>
<rect x="1122.85" y="328.77" width="5.68" height="1.15" fill="#e0584e" fill-opacity="0.58"/>
<rect x="1129.52" y="328.77" width="2.35" height="1.15" fill="#e0584e" fill-opacity="0.58"/>
<rect x="1132.85" y="328.77" width="5.06" height="1.15" fill="#e0584e" fill-opacity="0.58"/>
<rect x="1138.72" y="328.77" width="4.02" height="1.15" fill="#a8bcd8" fill-opacity="0.48"/>
<rect x="1143.72" y="328.77" width="2.78" height="1.15" fill="#a8bcd8" fill-opacity="0.48"/>
<rect x="1112.93" y="330.44" width="5.68" height="1.15" fill="#b4b4b4" fill-opacity="0.4"/>
<rect x="1119.60" y="330.44" width="8.18" height="1.15" fill="#b4b4b4" fill-opacity="0.4"/>
<rect x="1128.77" y="330.44" width="2.35" height="1.15" fill="#b4b4b4" fill-opacity="0.4"/>
<rect x="1132.10" y="330.44" width="1.84" height="1.15" fill="#b4b4b4" fill-opacity="0.4"/>
<rect x="1114.26" y="332.10" width="7.78" height="1.15" fill="#e0c090" fill-opacity="0.55"/>
<rect x="1123.51" y="332.10" width="6.52" height="1.15" fill="#d8b830" fill-opacity="0.6"/>
<rect x="1131.01" y="332.10" width="9.02" height="1.15" fill="#d8b830" fill-opacity="0.6"/>
<rect x="1141.01" y="332.10" width="6.52" height="1.15" fill="#d8b830" fill-opacity="0.6"/>
<rect x="1148.51" y="332.10" width="4.85" height="1.15" fill="#d8b830" fill-opacity="0.6"/>
<rect x="1154.34" y="332.10" width="2.35" height="1.15" fill="#d8b830" fill-opacity="0.6"/>
<rect x="1157.68" y="332.10" width="5.68" height="1.15" fill="#d8b830" fill-opacity="0.6"/>
<rect x="1164.34" y="332.10" width="3.32" height="1.15" fill="#d8b830" fill-opacity="0.6"/>
<rect x="1168.47" y="332.10" width="8.11" height="1.15" fill="#b4b4b4" fill-opacity="0.4"/>
<rect x="1114.26" y="333.77" width="4.02" height="1.15" fill="#b4b4b4" fill-opacity="0.4"/>
<rect x="1119.26" y="333.77" width="1.46" height="1.15" fill="#b4b4b4" fill-opacity="0.4"/>
<rect x="1110.95" y="335.44" width="6.52" height="1.15" fill="#dcdcdc" fill-opacity="0.5"/>
<rect x="1118.45" y="335.44" width="2.27" height="1.15" fill="#dcdcdc" fill-opacity="0.5"/>
<rect x="1122.85" y="335.44" width="3.18" height="1.15" fill="#b4b4b4" fill-opacity="0.4"/>
<rect x="1127.02" y="335.44" width="0.97" height="1.15" fill="#b4b4b4" fill-opacity="0.4"/>
<rect x="1109.96" y="338.77" width="4.81" height="1.15" fill="#e0c090" fill-opacity="0.55"/>
<rect x="1117.56" y="338.77" width="9.02" height="1.15" fill="#b8c02c" fill-opacity="0.55"/>
<rect x="1127.56" y="338.77" width="4.85" height="1.15" fill="#b8c02c" fill-opacity="0.55"/>
<rect x="1133.39" y="338.77" width="1.54" height="1.15" fill="#b8c02c" fill-opacity="0.55"/>
<rect x="1121.2" y="48" width="0.8" height="10" fill="#b4bc2c" fill-opacity="0.35"/>
<rect x="1109" y="148.7" width="93" height="1.1" fill="#28527e"/>
<rect x="1105" y="230" width="1.4" height="40" fill="#3f74b0"/>
<rect x="1105" y="271.8" width="1.4" height="2.3" fill="#3f74b0"/>
<rect x="1105" y="274.8" width="1.4" height="10.2" fill="#3f74b0"/>
<rect x="1202" y="45.5" width="1" height="614.5" fill="#343434"/>
<rect x="1202" y="45.5" width="8" height="1" fill="#2e2e2e"/>
<rect x="1203" y="202" width="7" height="109" fill="#424242"/>
<rect x="1203" y="220" width="7" height="1.2" fill="#8a8478"/>
<rect x="1203" y="359" width="3.5" height="67.6" fill="#2f5c96"/>
<rect x="1203" y="428" width="3.5" height="5.4" fill="#2f5c96"/>
<rect x="1203" y="435.7" width="3.5" height="17" fill="#2f5c96"/>
</svg>
<div id="shadow"></div>
<div style="position:absolute;left:0;top:659px;width:1210px;height:1px;background:#454545"></div>
<svg id="ov" width="1210" height="660" viewBox="0 0 1210 660" style="position:absolute;left:0;top:0">
 
 <!-- tab icon -->
 <g transform="translate(6.3,5.9)">
   <path d="M0.5 0.5 H5.6 L8.8 3.7 V12.3 H0.5 Z" fill="#f4ead4" stroke="#c0962a" stroke-width="1"/>
   <path d="M5.6 0.5 V3.7 H8.8" fill="#dcc084" stroke="#c0962a" stroke-width="0.7"/>
   <rect x="2.5" y="4.9" width="2" height="6.2" rx="0.5" fill="#ac2e2a"/>
   <rect x="5.9" y="4.9" width="1.4" height="2.2" rx="0.4" fill="#c23a30"/>
   <path d="M4.4 10.6 L6.5 7.2" stroke="#b88850" stroke-width="1.1"/>
  </g>
 <!-- close x -->
 <path d="M158.3 8.8 L165.8 16.2 M165.8 8.8 L158.3 16.2" stroke="#d0d0d0" stroke-width="1.15"/>
 <!-- breadcrumb chevrons -->
 <g fill="none" stroke="#a9a9a9" stroke-width="1">
  <path d="M110.5 31.5 L114.5 35.5 L110.5 39.5"/>
  <path d="M185.8 31.5 L189.8 35.5 L185.8 39.5"/>
  <path d="M283.3 31.5 L287.3 35.5 L283.3 39.5"/>
  <path d="M314.5 31.5 L318.5 35.5 L314.5 39.5"/>
  <path d="M338.3 31.5 L342.3 35.5 L338.3 39.5"/>
  <path d="M485 31.5 L489 35.5 L485 39.5"/>
 </g>
 <g transform="translate(346.8,29)">
   <path d="M0.5 0.5 H5.6 L8.8 3.7 V12.3 H0.5 Z" fill="#f4ead4" stroke="#c0962a" stroke-width="1"/>
   <path d="M5.6 0.5 V3.7 H8.8" fill="#dcc084" stroke="#c0962a" stroke-width="0.7"/>
   <rect x="2.5" y="4.9" width="2" height="6.2" rx="0.5" fill="#ac2e2a"/>
   <rect x="5.9" y="4.9" width="1.4" height="2.2" rx="0.4" fill="#c23a30"/>
   <path d="M4.4 10.6 L6.5 7.2" stroke="#b88850" stroke-width="1.1"/>
  </g>
 <!-- symbol class icon -->
 <g transform="translate(493.3,29.3) scale(0.82)" fill="#ee9d28">
  <path d="M11.34 9.71h.71l2.67-2.67v-.71L13.38 5h-.7l-1.82 1.81h-5V5.56l1.86-1.85V3l-2-2H5L1 5v.71l2 2h.71l1.14-1.15v5.79l.5.5H10v.52l1.33 1.34h.71l2.67-2.67v-.71L13.37 10h-.7l-1.86 1.85h-5v-4H10v.48l1.34 1.38zm1.69-3.65l.63.63-2 2-.63-.63 2-2zm0 5l.63.63-2 2-.63-.63 2-2zM3.35 6.65l-1.29-1.3 3.29-3.29 1.3 1.29-3.3 3.3z"/>
 </g>
 <!-- top right icons -->
 <g transform="translate(1078.5,5.5) scale(0.875)" fill="#c5c5c5">
  <path fill-rule="evenodd" d="M9.1 4.4L8.6 2H7.4l-.5 2.4-.7.3-2-1.3-.9.8 1.3 2-.2.7-2.4.5v1.2l2.4.5.3.8-1.3 2 .8.8 2-1.3.8.3.4 2.3h1.2l.5-2.4.8-.3 2 1.3.8-.8-1.3-2 .3-.8 2.3-.4V7.4l-2.4-.5-.3-.8 1.3-2-.8-.8-2 1.3-.7-.2zM9.4 1l.5 2.4L12 2.1l2 2-1.4 2.1 2.4.4v2.8l-2.4.5L14 12l-2 2-2.1-1.4-.5 2.4H6.6l-.5-2.4L4 13.9l-2-2 1.4-2.1L1 9.4V6.6l2.4-.5L2.1 4l2-2 2.1 1.4.4-2.4h2.8zm.6 7c0 1.1-.9 2-2 2s-2-.9-2-2 .9-2 2-2 2 .9 2 2zM8 9c.6 0 1-.4 1-1s-.4-1-1-1-1 .4-1 1 .4 1 1 1z"/>
 </g>
 <rect x="1108.5" y="8.5" width="8.2" height="8" fill="none" stroke="#c5c5c5" stroke-width="1"/>
 <g fill="none" stroke="#c5c5c5" stroke-width="1">
  <circle cx="1135.2" cy="8.8" r="1.7"/>
  <path d="M1135.2 10.6 V14.5 Q1135.2 16.8 1137.5 16.8 H1139.2"/>
  <path d="M1137.6 15.3 L1139.2 16.8 L1137.6 18.3"/>
  <circle cx="1143.2" cy="17.2" r="1.7"/>
  <path d="M1143.2 15.4 V11 Q1143.2 8.6 1140.9 8.6 H1139.6"/>
  <path d="M1141.2 7.1 L1139.6 8.6 L1141.2 10.1"/>
  <rect x="1160.5" y="6.5" width="11" height="11" rx="1"/>
  <path d="M1166.5 6.5 V17.5"/>
 </g>
 <g fill="#c5c5c5">
  <circle cx="1188" cy="12.6" r="0.95"/>
  <circle cx="1192.5" cy="12.6" r="0.95"/>
  <circle cx="1197" cy="12.6" r="0.95"/>
 </g>
<path transform="translate(498,119.8)" d="M0 0 L0 11.6 L2.7 9.2 L4.6 13.4 L6.1 12.8 L4.3 8.7 L7.6 8.4 Z" fill="#f4f4f4" stroke="#000" stroke-width="0.9" stroke-linejoin="round"/>
</svg>
</body></html>
